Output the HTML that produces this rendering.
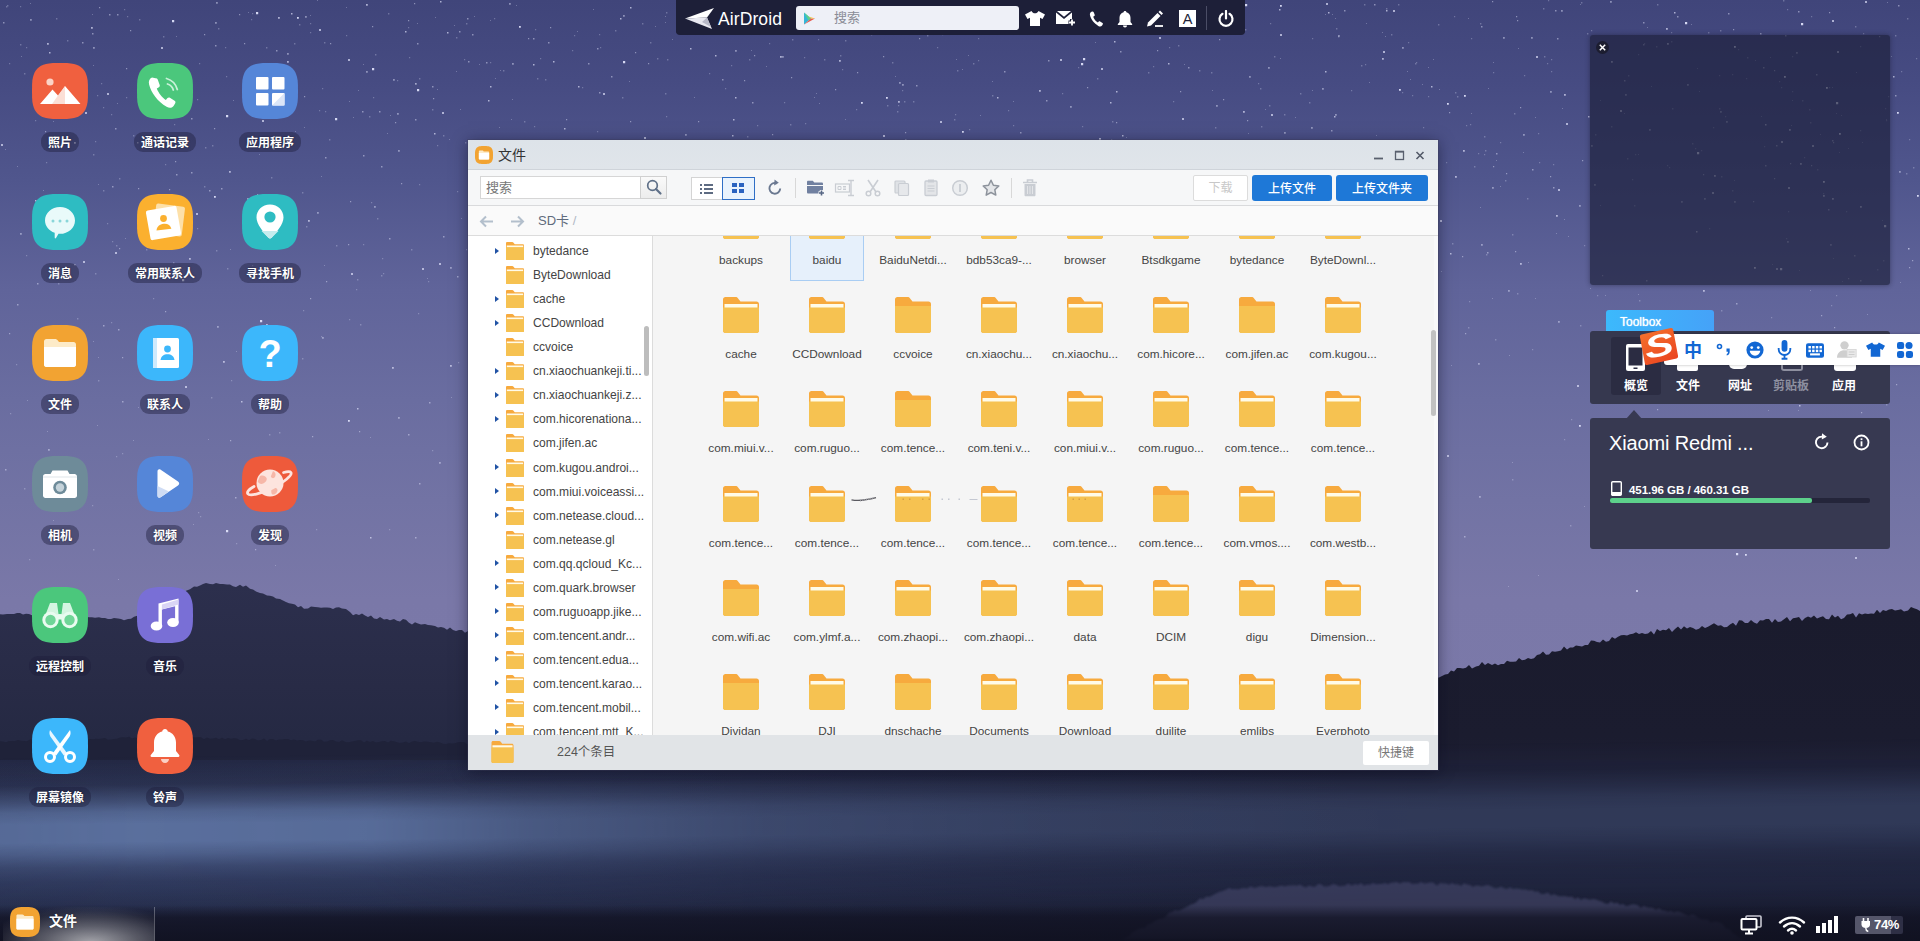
<!DOCTYPE html><html lang="zh-CN"><head><meta charset="utf-8"><title>AirDroid</title><style>
*{box-sizing:border-box;margin:0;padding:0}
html,body{width:1920px;height:941px;overflow:hidden;background:#3a3d68}
body{position:relative;font-family:"Liberation Sans","Noto Sans CJK SC",sans-serif;font-size:12px;color:#444}
#bg{position:absolute;left:0;top:0;width:1920px;height:941px;background:linear-gradient(180deg,#40457a 0px,#464b82 80px,#50568d 180px,#60649a 290px,#6a6da0 400px,#7273a4 500px,#7a78a8 600px,#7b79a9 700px,#1c1e34 701px)}
#bgsvg{position:absolute;left:0;top:0}
.abs{position:absolute}
/* top bar */
#topbar{position:absolute;left:676px;top:1px;width:569px;height:34px;box-shadow:0 -1px 0 #1d1f38;background:#1d1f38;border-radius:0 0 4px 4px}
#topbar .search{position:absolute;left:120px;top:5px;width:223px;height:24px;background:#eef0f7;border-radius:3px}
#topbar .search span{position:absolute;left:38px;top:0;line-height:24px;font-size:13px;color:#8a8c96}
#topbar svg{position:absolute}
.logo{position:absolute;left:42px;top:5px;font-size:17.5px;line-height:26px;color:#fff;letter-spacing:.1px;font-family:"Liberation Sans",sans-serif}
/* desktop icons */
.dicon{position:absolute;width:104px;height:100px;text-align:center}
.dicon svg{position:absolute;left:24px;top:0}
.dicon .lbl{position:absolute;left:0;right:0;top:69px;text-align:center;font-size:0}
.dicon .lbl span{display:inline-block;height:20px;line-height:22px;padding:0 7px;border-radius:9px;background:rgba(30,30,60,.44);color:#fff;font-size:12px;font-weight:bold;text-shadow:0 0 2px rgba(0,0,0,.5)}
/* window */
#win{position:absolute;left:468px;top:140px;width:970px;height:630px;background:#f5f5f5;box-shadow:0 0 0 1px rgba(60,60,90,.35),0 2px 14px rgba(10,10,30,.5)}
#win .title{position:absolute;left:0;top:0;width:970px;height:30px;background:linear-gradient(#dde3e9,#e0e5ea);border-bottom:1px solid #cfd4da}
#win .title .t{position:absolute;left:30px;top:0;line-height:30px;font-size:14px;color:#333}
#win .tb{position:absolute;left:0;top:30px;width:970px;height:36px;background:#f6f7f8;border-bottom:1px solid #d9dadc}
#win .pb{position:absolute;left:0;top:66px;width:970px;height:30px;background:#fafafa;border-bottom:1px solid #dcdcdc}
#win .tree{position:absolute;left:0;top:96px;width:185px;height:499px;background:#fff;border-right:1px solid #dcdcdc;overflow:hidden}
#win .grid{position:absolute;left:185px;top:96px;width:785px;height:499px;background:#f5f5f5;overflow:hidden}
#win .sb{position:absolute;left:0;top:595px;width:970px;height:35px;background:#e1e4e7}
.trow{position:absolute;left:0;height:24px;width:185px;line-height:24px;font-size:12.05px;color:#444;white-space:nowrap}
.trow i{position:absolute;left:27px;top:9.5px;width:0;height:0;border-left:4.5px solid #2153a5;border-top:3.5px solid transparent;border-bottom:3.5px solid transparent}
.trow svg{position:absolute;left:38px;top:3px}
.trow span{position:absolute;left:65px;top:1px}
.cell{position:absolute;width:74px;height:88px;text-align:center}
.cell svg{position:absolute;left:19px;top:10px}
.cell span{position:absolute;left:-6px;right:-6px;top:59px;line-height:16px;font-size:11.8px;color:#444;white-space:nowrap}
.cell.sel{background:#e6f0fb;border:1px solid #a9cdf3}.cell.sel svg{left:18px;top:9px}.cell.sel span{top:58px;left:-7px;right:-7px}
.btn{position:absolute;height:26px;line-height:27px;text-align:center;font-size:12px;border-radius:2px}
.btn.blue{background:#1e78d7;color:#fff;font-weight:500;border-radius:3px;line-height:29px}
/* right panels */
.panel{position:absolute;left:1590px;width:300px;background:#373951;border-radius:3px}
</style></head><body><div id="bg"></div><svg id="bgsvg" width="1920" height="941" viewBox="0 0 1920 941">
<defs>
<linearGradient id="gl" gradientUnits="userSpaceOnUse" x1="0" y1="584" x2="0" y2="790"><stop offset="0" stop-color="#2c2f4d"/><stop offset="0.5" stop-color="#282b46"/><stop offset="0.75" stop-color="#252943"/><stop offset="1" stop-color="#222640"/></linearGradient>
<linearGradient id="gr" gradientUnits="userSpaceOnUse" x1="0" y1="610" x2="0" y2="790"><stop offset="0" stop-color="#1a1b2d"/><stop offset="0.7" stop-color="#1b1c2f"/><stop offset="1" stop-color="#1d1f35"/></linearGradient>
<linearGradient id="mist" gradientUnits="userSpaceOnUse" x1="0" y1="755" x2="0" y2="925"><stop offset="0" stop-color="#5a6f9d" stop-opacity="0"/><stop offset="0.165" stop-color="#5a6f9d" stop-opacity=".14"/><stop offset="0.265" stop-color="#5a6f9d" stop-opacity=".55"/><stop offset="0.324" stop-color="#5a6f9d" stop-opacity=".85"/><stop offset="0.394" stop-color="#5a6f9d" stop-opacity="1"/><stop offset="0.5" stop-color="#5a6f9d" stop-opacity="1"/><stop offset="0.571" stop-color="#586d9c" stop-opacity=".8"/><stop offset="0.647" stop-color="#54699a" stop-opacity=".5"/><stop offset="0.735" stop-color="#4e6396" stop-opacity=".3"/><stop offset="0.882" stop-color="#4a5f92" stop-opacity=".15"/><stop offset="1" stop-color="#4a5f92" stop-opacity="0"/></linearGradient>
<linearGradient id="mistx" x1="0" y1="0" x2="1" y2="0"><stop offset="0" stop-color="#fff" stop-opacity=".92"/><stop offset="0.08" stop-color="#fff" stop-opacity="1"/><stop offset="0.2" stop-color="#fff" stop-opacity=".95"/><stop offset="0.28" stop-color="#fff" stop-opacity=".7"/><stop offset="0.4" stop-color="#fff" stop-opacity=".48"/><stop offset="0.55" stop-color="#fff" stop-opacity=".38"/><stop offset="0.75" stop-color="#fff" stop-opacity=".33"/><stop offset="1" stop-color="#fff" stop-opacity=".33"/></linearGradient>
<mask id="mm"><rect x="-20" y="740" width="1960" height="220" fill="url(#mistx)"/></mask>
<linearGradient id="water" gradientUnits="userSpaceOnUse" x1="0" y1="760" x2="0" y2="941"><stop offset="0" stop-color="#1b1d33"/><stop offset="0.7" stop-color="#1c2038"/><stop offset="1" stop-color="#151829"/></linearGradient>
<filter id="sb" x="0" y="0" width="100%" height="100%"><feGaussianBlur stdDeviation="0.45"/></filter><linearGradient id="lx" x1="0" y1="0" x2="1" y2="0"><stop offset="0" stop-color="#34406a" stop-opacity=".3"/><stop offset="0.3" stop-color="#34406a" stop-opacity=".26"/><stop offset="0.7" stop-color="#34406a" stop-opacity="0"/></linearGradient><filter id="blur2"><feGaussianBlur stdDeviation="1.2"/></filter>
</defs>
<g fill="#e6e8ff" filter="url(#sb)"><path fill-opacity="0.28" d="M622 97h1.4v1.4h-1.4zM181 373h1v1h-1zM95 141h1.2v1.2h-1.2zM1492 298h1v1h-1zM1169 47h1.2v1.2h-1.2zM546 247h1.2v1.2h-1.2zM419 184h1.2v1.2h-1.2zM766 66h1v1h-1zM1153 66h1.2v1.2h-1.2zM1178 45h1.4v1.4h-1.4zM236 543h1.2v1.2h-1.2zM56 18h1.4v1.4h-1.4zM921 418h1.4v1.4h-1.4zM230 249h1v1h-1zM1907 18h1.4v1.4h-1.4zM1439 89h1v1h-1zM1005 12h1v1h-1zM868 18h1.2v1.2h-1.2zM263 78h1v1h-1zM275 565h1v1h-1zM1764 146h1.2v1.2h-1.2zM1535 117h1v1h-1zM1644 43h1.2v1.2h-1.2zM310 32h1.2v1.2h-1.2zM666 12h1.4v1.4h-1.4zM973 440h1.4v1.4h-1.4zM27 400h1v1h-1zM685 1h1.4v1.4h-1.4zM1260 159h1v1h-1zM60 85h1.2v1.2h-1.2zM1215 127h1.4v1.4h-1.4zM1427 195h1v1h-1zM418 313h1.2v1.2h-1.2zM895 76h1v1h-1zM649 255h1v1h-1zM93 65h1v1h-1zM479 170h1.2v1.2h-1.2zM1382 32h1v1h-1zM1779 81h1.2v1.2h-1.2zM657 58h1.4v1.4h-1.4zM388 13h1.4v1.4h-1.4zM119 178h1.4v1.4h-1.4zM899 287h1v1h-1zM156 146h1.2v1.2h-1.2zM1470 124h1.2v1.2h-1.2zM1721 310h1.4v1.4h-1.4zM1544 56h1.4v1.4h-1.4zM1213 159h1.2v1.2h-1.2zM67 40h1.4v1.4h-1.4zM1433 441h1.4v1.4h-1.4zM1811 16h1.2v1.2h-1.2zM825 316h1.4v1.4h-1.4zM1695 148h1.2v1.2h-1.2zM1786 238h1.2v1.2h-1.2zM800 553h1v1h-1zM750 259h1v1h-1zM1747 57h1.4v1.4h-1.4zM1736 397h1v1h-1zM1802 100h1.4v1.4h-1.4zM588 269h1.4v1.4h-1.4zM769 43h1.2v1.2h-1.2zM1721 176h1.4v1.4h-1.4zM382 258h1.2v1.2h-1.2zM1719 108h1.4v1.4h-1.4zM93 549h1.4v1.4h-1.4zM317 0h1v1h-1zM456 37h1.4v1.4h-1.4zM1261 126h1.4v1.4h-1.4zM973 411h1.2v1.2h-1.2zM1913 167h1.4v1.4h-1.4zM1317 587h1v1h-1zM1570 525h1.4v1.4h-1.4zM493 181h1.2v1.2h-1.2zM1103 184h1.2v1.2h-1.2zM942 315h1.2v1.2h-1.2zM957 70h1.4v1.4h-1.4zM1078 67h1.2v1.2h-1.2zM1886 404h1.4v1.4h-1.4zM290 95h1.2v1.2h-1.2zM1820 134h1v1h-1zM887 105h1.4v1.4h-1.4zM899 188h1.2v1.2h-1.2zM722 162h1v1h-1zM356 289h1.2v1.2h-1.2zM1611 126h1.4v1.4h-1.4zM227 268h1.4v1.4h-1.4zM1657 4h1.4v1.4h-1.4zM955 190h1.4v1.4h-1.4zM1788 211h1.2v1.2h-1.2zM1872 419h1.2v1.2h-1.2zM1369 82h1v1h-1zM1471 38h1.2v1.2h-1.2zM1281 293h1v1h-1zM1787 9h1.2v1.2h-1.2zM30 3h1v1h-1zM419 78h1.4v1.4h-1.4zM1300 93h1.4v1.4h-1.4zM1512 462h1v1h-1zM1600 205h1v1h-1zM369 116h1.4v1.4h-1.4zM1126 137h1v1h-1zM98 357h1v1h-1zM868 217h1.4v1.4h-1.4zM703 212h1.2v1.2h-1.2zM1062 93h1.2v1.2h-1.2zM474 16h1v1h-1zM500 70h1v1h-1zM357 279h1.4v1.4h-1.4zM173 262h1.4v1.4h-1.4zM511 119h1v1h-1zM1348 368h1.2v1.2h-1.2zM1860 46h1.2v1.2h-1.2zM599 355h1.4v1.4h-1.4zM537 78h1.4v1.4h-1.4zM437 145h1.2v1.2h-1.2zM316 529h1.2v1.2h-1.2zM1863 33h1.2v1.2h-1.2zM454 25h1v1h-1zM231 380h1.2v1.2h-1.2zM162 378h1.4v1.4h-1.4zM465 142h1.4v1.4h-1.4zM845 40h1.4v1.4h-1.4zM1632 179h1.2v1.2h-1.2zM1619 536h1.2v1.2h-1.2zM1030 200h1.4v1.4h-1.4zM20 44h1.4v1.4h-1.4zM845 400h1.4v1.4h-1.4zM1433 59h1v1h-1zM1212 335h1v1h-1zM792 39h1.4v1.4h-1.4zM233 100h1v1h-1zM1480 207h1v1h-1zM1842 281h1v1h-1zM466 249h1.2v1.2h-1.2zM728 5h1.2v1.2h-1.2zM306 226h1.4v1.4h-1.4zM1468 18h1v1h-1zM1634 205h1.4v1.4h-1.4zM1920 256h1.2v1.2h-1.2zM1084 146h1.2v1.2h-1.2zM1287 368h1.4v1.4h-1.4zM540 58h1.2v1.2h-1.2zM667 59h1.4v1.4h-1.4zM1699 91h1v1h-1zM1184 243h1v1h-1zM302 192h1.4v1.4h-1.4zM437 89h1v1h-1zM817 181h1.2v1.2h-1.2zM1836 113h1v1h-1zM375 54h1.4v1.4h-1.4zM1260 88h1.4v1.4h-1.4zM53 121h1v1h-1zM1860 130h1.2v1.2h-1.2zM1064 145h1.4v1.4h-1.4zM1317 348h1.2v1.2h-1.2zM1488 88h1v1h-1zM1672 108h1.4v1.4h-1.4zM1332 14h1v1h-1zM937 47h1.2v1.2h-1.2zM929 20h1.4v1.4h-1.4zM913 101h1.4v1.4h-1.4zM993 231h1v1h-1zM1131 28h1.2v1.2h-1.2zM636 300h1.2v1.2h-1.2zM383 273h1.2v1.2h-1.2zM1523 152h1v1h-1zM647 207h1.2v1.2h-1.2zM1717 518h1v1h-1zM324 42h1.4v1.4h-1.4zM1098 422h1v1h-1zM1352 140h1.4v1.4h-1.4zM1246 259h1v1h-1zM1177 497h1.2v1.2h-1.2zM1155 212h1.4v1.4h-1.4zM1015 225h1.2v1.2h-1.2zM747 136h1.4v1.4h-1.4zM1408 42h1.2v1.2h-1.2zM1909 139h1.2v1.2h-1.2zM1832 87h1v1h-1zM969 148h1v1h-1zM1009 2h1.4v1.4h-1.4zM679 318h1v1h-1zM92 505h1.2v1.2h-1.2zM1274 56h1.4v1.4h-1.4zM1584 506h1v1h-1zM1300 206h1v1h-1zM1132 365h1.4v1.4h-1.4zM197 228h1.2v1.2h-1.2zM1457 96h1.4v1.4h-1.4zM1539 162h1.2v1.2h-1.2zM111 114h1.2v1.2h-1.2zM491 170h1.2v1.2h-1.2zM740 370h1.4v1.4h-1.4zM1452 243h1.4v1.4h-1.4zM1454 16h1.2v1.2h-1.2zM1346 279h1v1h-1zM927 35h1.4v1.4h-1.4zM1886 119h1v1h-1zM1121 234h1.4v1.4h-1.4zM1068 33h1.2v1.2h-1.2zM390 115h1v1h-1zM1656 46h1.4v1.4h-1.4zM183 502h1.4v1.4h-1.4zM594 165h1.4v1.4h-1.4zM373 97h1.2v1.2h-1.2zM863 158h1.2v1.2h-1.2zM1112 264h1.2v1.2h-1.2zM10 413h1.2v1.2h-1.2zM898 105h1.2v1.2h-1.2zM1199 70h1.4v1.4h-1.4zM1564 219h1v1h-1zM1691 24h1v1h-1zM1708 32h1.4v1.4h-1.4zM63 215h1.2v1.2h-1.2zM1446 162h1.2v1.2h-1.2zM1003 433h1.2v1.2h-1.2zM1166 294h1v1h-1zM1228 316h1.2v1.2h-1.2zM93 341h1v1h-1zM599 34h1.2v1.2h-1.2zM842 69h1.2v1.2h-1.2zM784 102h1.2v1.2h-1.2zM1412 265h1v1h-1zM650 42h1.4v1.4h-1.4zM216 250h1.4v1.4h-1.4zM1846 211h1.2v1.2h-1.2zM53 520h1v1h-1zM1391 34h1.4v1.4h-1.4zM1343 512h1.4v1.4h-1.4zM93 154h1.4v1.4h-1.4zM794 26h1v1h-1zM621 326h1v1h-1zM139 19h1.4v1.4h-1.4zM1190 381h1v1h-1zM360 324h1.4v1.4h-1.4zM1248 133h1v1h-1zM1543 8h1.4v1.4h-1.4zM310 23h1.2v1.2h-1.2zM705 344h1.4v1.4h-1.4zM494 18h1.2v1.2h-1.2zM751 50h1v1h-1zM1324 285h1.2v1.2h-1.2zM644 400h1v1h-1zM124 9h1.2v1.2h-1.2zM1638 154h1v1h-1zM97 425h1v1h-1zM818 39h1.2v1.2h-1.2zM460 109h1v1h-1zM346 7h1v1h-1zM417 23h1v1h-1zM127 16h1.2v1.2h-1.2zM781 220h1.2v1.2h-1.2zM1478 153h1.2v1.2h-1.2zM742 167h1.2v1.2h-1.2zM266 47h1.4v1.4h-1.4zM1538 575h1v1h-1zM1208 187h1v1h-1zM126 97h1.2v1.2h-1.2zM813 341h1.4v1.4h-1.4zM1385 36h1v1h-1zM928 162h1.2v1.2h-1.2zM840 55h1.4v1.4h-1.4zM98 184h1v1h-1zM325 111h1.2v1.2h-1.2zM1512 479h1.4v1.4h-1.4zM1823 193h1.2v1.2h-1.2zM212 145h1.4v1.4h-1.4zM1259 244h1.4v1.4h-1.4zM479 64h1v1h-1zM1423 127h1.2v1.2h-1.2zM559 330h1.4v1.4h-1.4zM1867 314h1v1h-1zM449 139h1v1h-1zM329 139h1.4v1.4h-1.4zM371 202h1.2v1.2h-1.2zM908 177h1.4v1.4h-1.4zM1097 141h1.4v1.4h-1.4zM1325 14h1v1h-1zM1770 57h1v1h-1zM77 318h1.4v1.4h-1.4zM47 431h1v1h-1zM336 245h1.4v1.4h-1.4zM988 4h1.4v1.4h-1.4zM363 244h1.2v1.2h-1.2zM1173 101h1.2v1.2h-1.2zM1591 30h1.2v1.2h-1.2zM1792 56h1.2v1.2h-1.2zM1312 446h1v1h-1zM1422 84h1v1h-1zM117 103h1v1h-1zM1211 341h1v1h-1zM116 245h1.4v1.4h-1.4zM322 88h1.2v1.2h-1.2zM456 71h1v1h-1zM95 273h1.4v1.4h-1.4zM812 152h1.2v1.2h-1.2zM464 59h1.2v1.2h-1.2zM163 36h1.4v1.4h-1.4zM1339 370h1.4v1.4h-1.4zM1518 48h1v1h-1zM1335 235h1.2v1.2h-1.2zM1551 59h1.2v1.2h-1.2zM597 131h1.2v1.2h-1.2zM993 159h1.2v1.2h-1.2zM1045 188h1.2v1.2h-1.2zM814 97h1v1h-1zM905 494h1.4v1.4h-1.4zM1732 74h1.2v1.2h-1.2zM1895 35h1.4v1.4h-1.4zM788 292h1.2v1.2h-1.2zM1885 108h1.2v1.2h-1.2zM709 73h1.2v1.2h-1.2zM310 15h1v1h-1zM1517 293h1.4v1.4h-1.4zM112 241h1.2v1.2h-1.2zM978 201h1.2v1.2h-1.2zM1407 71h1v1h-1zM1624 113h1v1h-1zM1900 282h1v1h-1zM1343 297h1v1h-1zM1792 100h1v1h-1zM906 324h1.4v1.4h-1.4zM478 365h1.2v1.2h-1.2zM1111 139h1.2v1.2h-1.2zM363 64h1v1h-1zM200 516h1.2v1.2h-1.2zM295 352h1.4v1.4h-1.4zM1671 32h1.2v1.2h-1.2zM602 248h1v1h-1zM600 47h1.2v1.2h-1.2zM17 166h1v1h-1zM1792 91h1.2v1.2h-1.2zM1287 184h1.4v1.4h-1.4zM1719 75h1.2v1.2h-1.2zM1556 233h1v1h-1zM174 124h1.2v1.2h-1.2zM1852 361h1.4v1.4h-1.4zM784 382h1v1h-1zM954 119h1.4v1.4h-1.4zM978 60h1.2v1.2h-1.2zM806 573h1.4v1.4h-1.4zM984 216h1v1h-1zM197 99h1.2v1.2h-1.2zM1280 58h1v1h-1zM500 175h1.2v1.2h-1.2zM211 397h1.4v1.4h-1.4zM968 55h1v1h-1zM944 253h1.2v1.2h-1.2zM199 63h1.2v1.2h-1.2zM1754 362h1.2v1.2h-1.2zM1072 495h1.2v1.2h-1.2zM1638 294h1v1h-1zM1725 116h1.2v1.2h-1.2zM1267 197h1.2v1.2h-1.2zM1768 410h1v1h-1zM572 50h1.2v1.2h-1.2zM293 338h1v1h-1zM684 446h1v1h-1zM940 23h1.2v1.2h-1.2zM43 190h1v1h-1zM381 275h1.4v1.4h-1.4zM593 9h1v1h-1zM349 319h1.2v1.2h-1.2zM1307 316h1v1h-1zM1886 120h1.2v1.2h-1.2zM992 95h1.4v1.4h-1.4zM1469 301h1.2v1.2h-1.2zM1047 16h1.2v1.2h-1.2zM1163 10h1.4v1.4h-1.4zM1268 162h1.4v1.4h-1.4zM252 265h1.2v1.2h-1.2zM1339 324h1.4v1.4h-1.4zM279 328h1.2v1.2h-1.2zM1065 381h1.2v1.2h-1.2zM516 5h1v1h-1zM29 559h1.2v1.2h-1.2zM1508 586h1v1h-1zM1184 64h1v1h-1zM588 396h1.2v1.2h-1.2zM1393 188h1.4v1.4h-1.4zM761 495h1.4v1.4h-1.4zM218 28h1.4v1.4h-1.4zM150 403h1.2v1.2h-1.2zM1628 75h1.4v1.4h-1.4zM980 115h1v1h-1zM59 235h1.4v1.4h-1.4zM208 439h1v1h-1zM582 87h1.2v1.2h-1.2zM490 62h1.2v1.2h-1.2zM1799 270h1v1h-1zM1597 295h1.2v1.2h-1.2zM1361 65h1.4v1.4h-1.4zM1761 116h1v1h-1zM865 360h1.4v1.4h-1.4zM648 457h1v1h-1zM1245 29h1.4v1.4h-1.4zM853 197h1.4v1.4h-1.4zM1148 72h1.4v1.4h-1.4zM1854 377h1.4v1.4h-1.4zM964 1h1.2v1.2h-1.2zM1817 169h1.4v1.4h-1.4zM665 16h1v1h-1zM1141 217h1v1h-1zM1374 518h1.4v1.4h-1.4zM1189 367h1v1h-1zM370 437h1v1h-1zM428 281h1.2v1.2h-1.2zM904 101h1.4v1.4h-1.4zM1638 54h1.2v1.2h-1.2zM725 88h1.2v1.2h-1.2zM991 150h1.2v1.2h-1.2zM1218 5h1v1h-1zM623 219h1.2v1.2h-1.2zM1277 320h1.2v1.2h-1.2zM175 68h1.4v1.4h-1.4zM71 80h1.4v1.4h-1.4zM978 38h1.2v1.2h-1.2zM252 13h1.2v1.2h-1.2zM1564 439h1.2v1.2h-1.2zM5 149h1v1h-1zM1810 290h1v1h-1zM1738 49h1.2v1.2h-1.2zM534 126h1.2v1.2h-1.2zM168 140h1v1h-1zM1484 154h1.2v1.2h-1.2zM1500 142h1.2v1.2h-1.2zM1336 28h1.4v1.4h-1.4zM791 387h1v1h-1zM642 23h1.4v1.4h-1.4zM969 129h1.2v1.2h-1.2zM520 312h1v1h-1zM901 554h1.4v1.4h-1.4zM1709 228h1.2v1.2h-1.2zM204 186h1.4v1.4h-1.4zM902 90h1.2v1.2h-1.2zM1833 258h1v1h-1zM1441 271h1v1h-1zM146 249h1.4v1.4h-1.4zM20 6h1.2v1.2h-1.2zM1165 393h1v1h-1zM1422 185h1.2v1.2h-1.2zM458 362h1.2v1.2h-1.2zM890 244h1v1h-1zM1669 167h1.2v1.2h-1.2zM251 19h1.2v1.2h-1.2zM731 65h1.2v1.2h-1.2zM85 80h1v1h-1zM1295 117h1v1h-1zM1402 92h1.2v1.2h-1.2zM303 310h1.2v1.2h-1.2zM1538 133h1.2v1.2h-1.2zM735 164h1.2v1.2h-1.2zM1424 171h1v1h-1zM941 349h1.2v1.2h-1.2zM699 177h1.4v1.4h-1.4zM1512 234h1.4v1.4h-1.4zM1781 87h1.2v1.2h-1.2zM1284 114h1.4v1.4h-1.4zM1500 186h1v1h-1zM133 135h1.4v1.4h-1.4zM500 270h1.2v1.2h-1.2zM1286 263h1.2v1.2h-1.2zM353 117h1v1h-1zM1044 473h1.2v1.2h-1.2zM225 47h1.2v1.2h-1.2zM816 93h1v1h-1zM1600 100h1v1h-1zM934 335h1v1h-1zM1856 72h1v1h-1zM1647 27h1v1h-1zM891 27h1.2v1.2h-1.2zM1186 456h1.4v1.4h-1.4zM892 62h1.4v1.4h-1.4zM26 255h1.2v1.2h-1.2zM1428 96h1.2v1.2h-1.2zM1468 327h1.4v1.4h-1.4zM911 340h1v1h-1zM1338 36h1.4v1.4h-1.4zM905 221h1.4v1.4h-1.4zM1214 153h1.4v1.4h-1.4zM1412 172h1.4v1.4h-1.4zM1211 72h1.4v1.4h-1.4zM856 109h1.2v1.2h-1.2zM672 39h1v1h-1zM1667 165h1.2v1.2h-1.2zM21 56h1v1h-1zM259 154h1v1h-1zM1105 33h1.4v1.4h-1.4zM554 236h1v1h-1zM1580 325h1.4v1.4h-1.4zM198 512h1.2v1.2h-1.2zM1291 148h1.4v1.4h-1.4zM645 397h1.4v1.4h-1.4zM118 579h1v1h-1zM1471 113h1v1h-1zM1375 483h1.2v1.2h-1.2zM1053 33h1.4v1.4h-1.4zM294 43h1.4v1.4h-1.4zM1547 63h1.2v1.2h-1.2zM1438 24h1.4v1.4h-1.4zM46 162h1.2v1.2h-1.2zM956 59h1v1h-1zM1451 365h1v1h-1zM1734 180h1v1h-1zM1493 72h1.2v1.2h-1.2zM1185 10h1.2v1.2h-1.2zM861 156h1v1h-1zM1412 95h1.2v1.2h-1.2zM1082 126h1.2v1.2h-1.2zM809 7h1.2v1.2h-1.2zM1891 56h1v1h-1zM1697 68h1v1h-1zM1087 186h1v1h-1zM527 242h1.2v1.2h-1.2zM1755 60h1v1h-1zM248 12h1v1h-1zM934 389h1.4v1.4h-1.4zM1652 366h1.2v1.2h-1.2zM1010 310h1.2v1.2h-1.2zM133 440h1v1h-1zM271 177h1.4v1.4h-1.4zM929 486h1v1h-1zM432 109h1.4v1.4h-1.4zM1877 269h1.4v1.4h-1.4zM1128 142h1v1h-1zM505 461h1.2v1.2h-1.2zM1841 115h1v1h-1zM299 24h1.4v1.4h-1.4zM1428 67h1v1h-1zM1804 157h1.2v1.2h-1.2zM295 131h1v1h-1zM575 489h1.2v1.2h-1.2zM1810 122h1.4v1.4h-1.4zM1316 351h1.2v1.2h-1.2zM1122 327h1.2v1.2h-1.2zM757 125h1.2v1.2h-1.2zM1112 121h1.4v1.4h-1.4zM176 36h1v1h-1zM490 20h1v1h-1zM1455 92h1.4v1.4h-1.4zM1046 552h1.2v1.2h-1.2zM161 238h1v1h-1zM1013 125h1.2v1.2h-1.2zM26 47h1.2v1.2h-1.2zM1357 235h1v1h-1zM1309 102h1.4v1.4h-1.4zM880 376h1v1h-1zM1532 349h1.2v1.2h-1.2zM662 310h1.4v1.4h-1.4zM594 162h1v1h-1zM1888 96h1.2v1.2h-1.2zM897 111h1.4v1.4h-1.4zM107 223h1.2v1.2h-1.2zM1553 164h1.2v1.2h-1.2zM1887 2h1v1h-1zM1376 135h1v1h-1zM1018 221h1.2v1.2h-1.2zM451 397h1v1h-1zM896 234h1.4v1.4h-1.4zM1746 78h1.2v1.2h-1.2zM768 160h1.4v1.4h-1.4zM1720 30h1.4v1.4h-1.4zM1605 295h1v1h-1zM1154 336h1v1h-1zM1212 90h1v1h-1zM1571 419h1.2v1.2h-1.2zM983 291h1v1h-1zM512 99h1v1h-1zM570 287h1.4v1.4h-1.4zM686 214h1.4v1.4h-1.4zM590 355h1v1h-1zM443 135h1.4v1.4h-1.4zM205 147h1.4v1.4h-1.4zM1175 261h1.2v1.2h-1.2zM621 489h1.2v1.2h-1.2zM101 83h1.2v1.2h-1.2zM435 17h1v1h-1zM1337 237h1.2v1.2h-1.2zM302 358h1.4v1.4h-1.4zM960 330h1.2v1.2h-1.2zM83 76h1.4v1.4h-1.4zM714 12h1v1h-1zM58 283h1.4v1.4h-1.4zM1639 300h1.4v1.4h-1.4zM718 160h1v1h-1zM321 176h1v1h-1zM1298 187h1.4v1.4h-1.4zM6 6h1.4v1.4h-1.4zM805 123h1.2v1.2h-1.2zM866 348h1v1h-1zM1484 136h1.4v1.4h-1.4zM811 237h1v1h-1zM714 267h1.4v1.4h-1.4zM409 57h1.2v1.2h-1.2zM267 248h1.4v1.4h-1.4zM111 322h1.2v1.2h-1.2zM773 522h1v1h-1zM487 443h1v1h-1zM972 321h1.2v1.2h-1.2zM992 81h1v1h-1zM1855 26h1.4v1.4h-1.4zM1415 63h1.4v1.4h-1.4zM1230 191h1.4v1.4h-1.4zM535 29h1.2v1.2h-1.2zM296 339h1v1h-1zM171 78h1.2v1.2h-1.2zM1901 71h1.2v1.2h-1.2zM702 345h1.2v1.2h-1.2zM1836 295h1.2v1.2h-1.2zM321 336h1.2v1.2h-1.2zM16 364h1.2v1.2h-1.2zM655 26h1v1h-1zM503 70h1.4v1.4h-1.4zM973 63h1.4v1.4h-1.4zM524 121h1.4v1.4h-1.4zM1398 4h1.4v1.4h-1.4zM1882 220h1v1h-1zM138 407h1v1h-1zM1382 150h1.2v1.2h-1.2zM125 238h1v1h-1zM1260 183h1.4v1.4h-1.4zM1097 78h1.4v1.4h-1.4zM553 325h1.4v1.4h-1.4zM9 63h1.2v1.2h-1.2zM1354 376h1v1h-1zM978 26h1.4v1.4h-1.4zM187 223h1.4v1.4h-1.4zM824 239h1.4v1.4h-1.4zM166 90h1.2v1.2h-1.2zM494 337h1.2v1.2h-1.2zM934 195h1.2v1.2h-1.2zM940 10h1v1h-1zM962 69h1v1h-1zM279 432h1.4v1.4h-1.4zM1351 90h1.2v1.2h-1.2zM1002 413h1v1h-1zM1783 0h1.4v1.4h-1.4zM46 459h1v1h-1zM1848 148h1v1h-1zM387 133h1v1h-1zM790 124h1.4v1.4h-1.4zM1627 421h1.4v1.4h-1.4zM116 456h1.2v1.2h-1.2zM377 218h1.4v1.4h-1.4zM1701 150h1.2v1.2h-1.2zM1485 150h1.4v1.4h-1.4zM1335 18h1v1h-1zM1269 105h1.4v1.4h-1.4zM165 164h1.2v1.2h-1.2zM794 251h1.2v1.2h-1.2zM53 137h1v1h-1zM1258 83h1.2v1.2h-1.2zM226 76h1.2v1.2h-1.2zM606 384h1.4v1.4h-1.4zM1425 556h1.2v1.2h-1.2zM1105 337h1v1h-1zM587 165h1.4v1.4h-1.4zM1410 79h1v1h-1zM1883 260h1.4v1.4h-1.4zM7 5h1.4v1.4h-1.4zM749 59h1.4v1.4h-1.4zM1270 23h1.2v1.2h-1.2zM319 110h1.2v1.2h-1.2zM1524 75h1.2v1.2h-1.2zM1496 160h1v1h-1zM802 152h1.2v1.2h-1.2zM666 116h1.2v1.2h-1.2zM408 27h1.2v1.2h-1.2zM499 127h1v1h-1zM92 14h1v1h-1zM1839 152h1v1h-1zM845 119h1v1h-1zM717 193h1.2v1.2h-1.2zM1635 154h1.2v1.2h-1.2zM1364 4h1.4v1.4h-1.4zM1294 541h1.2v1.2h-1.2zM1795 378h1.4v1.4h-1.4zM1791 125h1v1h-1zM1265 109h1v1h-1zM1116 191h1v1h-1zM1509 355h1v1h-1zM1416 62h1.2v1.2h-1.2zM193 524h1v1h-1zM1343 550h1v1h-1zM1551 71h1.2v1.2h-1.2zM1829 87h1.2v1.2h-1.2zM1568 236h1v1h-1zM1505 180h1.4v1.4h-1.4zM1627 158h1.4v1.4h-1.4zM471 232h1.2v1.2h-1.2zM1809 512h1.4v1.4h-1.4zM1920 64h1v1h-1zM1474 166h1.4v1.4h-1.4zM397 80h1.2v1.2h-1.2zM461 218h1v1h-1zM1637 384h1.4v1.4h-1.4zM1528 262h1v1h-1zM1809 109h1.4v1.4h-1.4zM1072 326h1.2v1.2h-1.2zM24 73h1.4v1.4h-1.4zM665 22h1v1h-1zM1008 110h1.2v1.2h-1.2zM896 170h1.2v1.2h-1.2zM974 202h1v1h-1zM1862 142h1v1h-1zM545 79h1.4v1.4h-1.4zM1413 167h1v1h-1zM1398 296h1.4v1.4h-1.4zM803 176h1.4v1.4h-1.4zM1595 134h1.4v1.4h-1.4zM457 191h1.2v1.2h-1.2zM24 488h1.4v1.4h-1.4zM56 207h1.2v1.2h-1.2zM531 191h1.4v1.4h-1.4zM103 190h1.4v1.4h-1.4zM1590 288h1v1h-1zM1184 333h1.4v1.4h-1.4zM98 380h1.4v1.4h-1.4zM707 239h1.4v1.4h-1.4zM1466 125h1.2v1.2h-1.2zM1692 143h1.4v1.4h-1.4zM1580 4h1v1h-1zM651 160h1.2v1.2h-1.2zM349 101h1v1h-1zM574 35h1.2v1.2h-1.2zM1581 2h1.4v1.4h-1.4zM819 372h1.4v1.4h-1.4zM122 453h1.2v1.2h-1.2zM1713 127h1.2v1.2h-1.2zM1671 41h1.4v1.4h-1.4zM103 107h1.2v1.2h-1.2zM1334 236h1v1h-1zM1562 108h1v1h-1zM519 255h1.4v1.4h-1.4zM1366 23h1v1h-1zM696 285h1.4v1.4h-1.4zM1095 42h1v1h-1zM1486 254h1.4v1.4h-1.4zM269 434h1.4v1.4h-1.4zM1587 33h1.4v1.4h-1.4zM1732 190h1.4v1.4h-1.4zM1312 38h1.2v1.2h-1.2zM942 34h1.2v1.2h-1.2zM1331 215h1v1h-1zM496 433h1v1h-1zM987 275h1.4v1.4h-1.4zM574 540h1v1h-1zM1493 62h1v1h-1zM577 31h1v1h-1zM1386 8h1.4v1.4h-1.4zM324 265h1v1h-1zM346 35h1.2v1.2h-1.2zM1701 342h1.4v1.4h-1.4zM1651 86h1v1h-1zM1535 298h1v1h-1zM1831 305h1.2v1.2h-1.2zM1692 448h1.4v1.4h-1.4zM1345 410h1.4v1.4h-1.4zM304 127h1v1h-1zM568 282h1.2v1.2h-1.2zM389 529h1.2v1.2h-1.2zM432 450h1.2v1.2h-1.2zM35 120h1.2v1.2h-1.2zM64 198h1.2v1.2h-1.2zM1527 198h1.4v1.4h-1.4zM694 97h1v1h-1zM707 21h1.2v1.2h-1.2zM466 23h1.4v1.4h-1.4zM833 253h1.4v1.4h-1.4zM84 239h1v1h-1zM1013 101h1v1h-1zM1514 113h1.4v1.4h-1.4zM615 30h1.4v1.4h-1.4zM1312 90h1v1h-1zM1495 339h1.4v1.4h-1.4zM892 227h1.4v1.4h-1.4zM1798 410h1v1h-1zM1584 245h1.2v1.2h-1.2zM358 90h1v1h-1zM1813 356h1v1h-1zM1023 178h1v1h-1zM1408 162h1.4v1.4h-1.4zM503 460h1.4v1.4h-1.4zM824 59h1.4v1.4h-1.4zM1133 337h1v1h-1zM864 11h1.4v1.4h-1.4zM427 278h1v1h-1zM1717 397h1v1h-1zM629 81h1v1h-1zM1772 264h1v1h-1zM153 298h1.2v1.2h-1.2zM764 352h1.4v1.4h-1.4zM665 93h1.4v1.4h-1.4zM1548 0h1.2v1.2h-1.2zM63 233h1.2v1.2h-1.2zM718 443h1.2v1.2h-1.2zM1118 23h1.4v1.4h-1.4zM1318 300h1v1h-1zM411 249h1.4v1.4h-1.4zM1906 173h1.4v1.4h-1.4zM1231 361h1.2v1.2h-1.2zM806 573h1v1h-1zM1365 64h1.2v1.2h-1.2zM804 57h1.2v1.2h-1.2zM938 189h1.2v1.2h-1.2zM482 159h1.4v1.4h-1.4zM415 83h1.2v1.2h-1.2zM97 95h1.2v1.2h-1.2zM955 114h1.2v1.2h-1.2zM1285 156h1.2v1.2h-1.2zM1480 23h1.4v1.4h-1.4zM1916 58h1.2v1.2h-1.2zM236 351h1v1h-1zM495 78h1v1h-1zM1771 317h1.2v1.2h-1.2zM819 103h1v1h-1z"/><path fill-opacity="0.45" d="M429 402h1.5v1.5h-1.5zM277 75h1.2v1.2h-1.2zM1103 336h1.5v1.5h-1.5zM1681 201h1.8v1.8h-1.8zM1404 198h1.5v1.5h-1.5zM599 92h1.5v1.5h-1.5zM1162 220h1.5v1.5h-1.5zM281 529h1.5v1.5h-1.5zM54 136h1.5v1.5h-1.5zM235 497h1.5v1.5h-1.5zM249 270h1.5v1.5h-1.5zM1909 267h1.2v1.2h-1.2zM1020 132h1.5v1.5h-1.5zM472 286h1.8v1.8h-1.8zM1561 10h1.8v1.8h-1.8zM735 307h1.8v1.8h-1.8zM1798 11h1.5v1.5h-1.5zM1462 256h1.2v1.2h-1.2zM780 153h1.2v1.2h-1.2zM1003 437h1.8v1.8h-1.8zM1492 1h1.2v1.2h-1.2zM215 45h1.5v1.5h-1.5zM1311 127h1.8v1.8h-1.8zM155 269h1.2v1.2h-1.2zM752 102h1.5v1.5h-1.5zM450 267h1.8v1.8h-1.8zM330 43h1.2v1.2h-1.2zM1753 201h1.2v1.2h-1.2zM1532 169h1.5v1.5h-1.5zM635 52h1.2v1.2h-1.2zM3 22h1.5v1.5h-1.5zM1240 284h1.2v1.2h-1.2zM122 401h1.5v1.5h-1.5zM1374 4h1.5v1.5h-1.5zM1646 280h1.5v1.5h-1.5zM1515 251h1.2v1.2h-1.2zM130 30h1.2v1.2h-1.2zM215 22h1.8v1.8h-1.8zM916 85h1.5v1.5h-1.5zM900 31h1.2v1.2h-1.2zM326 281h1.2v1.2h-1.2zM630 121h1.2v1.2h-1.2zM439 462h1.8v1.8h-1.8zM1256 205h1.2v1.2h-1.2zM138 188h1.2v1.2h-1.2zM1520 107h1.2v1.2h-1.2zM1265 218h1.2v1.2h-1.2zM1090 25h1.8v1.8h-1.8zM1306 380h1.2v1.2h-1.2zM1790 163h1.2v1.2h-1.2zM1169 202h1.5v1.5h-1.5zM1194 417h1.8v1.8h-1.8zM1315 385h1.5v1.5h-1.5zM883 56h1.2v1.2h-1.2zM1657 409h1.2v1.2h-1.2zM1765 165h1.5v1.5h-1.5zM1879 36h1.2v1.2h-1.2zM1418 167h1.5v1.5h-1.5zM1306 226h1.2v1.2h-1.2zM109 14h1.5v1.5h-1.5zM1465 333h1.2v1.2h-1.2zM30 19h1.8v1.8h-1.8zM898 276h1.8v1.8h-1.8zM1356 167h1.5v1.5h-1.5zM675 264h1.2v1.2h-1.2zM731 25h1.2v1.2h-1.2zM550 27h1.2v1.2h-1.2zM1328 473h1.5v1.5h-1.5zM501 350h1.8v1.8h-1.8zM1088 402h1.2v1.2h-1.2zM1557 38h1.5v1.5h-1.5zM1247 120h1.2v1.2h-1.2zM1746 363h1.5v1.5h-1.5zM1706 398h1.8v1.8h-1.8zM716 472h1.2v1.2h-1.2zM1678 429h1.5v1.5h-1.5zM1120 51h1.5v1.5h-1.5zM1724 350h1.2v1.2h-1.2zM93 47h1.8v1.8h-1.8zM1677 16h1.5v1.5h-1.5zM917 20h1.8v1.8h-1.8zM17 304h1.5v1.5h-1.5zM1493 166h1.2v1.2h-1.2zM835 89h1.2v1.2h-1.2zM762 215h1.2v1.2h-1.2zM857 72h1.2v1.2h-1.2zM1649 129h1.8v1.8h-1.8zM771 26h1.5v1.5h-1.5zM601 163h1.8v1.8h-1.8zM398 417h1.8v1.8h-1.8zM256 102h1.8v1.8h-1.8zM1048 60h1.5v1.5h-1.5zM1111 150h1.8v1.8h-1.8zM648 63h1.2v1.2h-1.2zM782 56h1.8v1.8h-1.8zM1134 279h1.8v1.8h-1.8zM1816 74h1.5v1.5h-1.5zM1128 359h1.8v1.8h-1.8zM290 107h1.5v1.5h-1.5zM592 204h1.8v1.8h-1.8zM1045 269h1.8v1.8h-1.8zM1481 26h1.5v1.5h-1.5zM1487 252h1.5v1.5h-1.5zM1102 175h1.2v1.2h-1.2zM1687 84h1.8v1.8h-1.8zM1832 140h1.5v1.5h-1.5zM528 38h1.2v1.2h-1.2zM1523 134h1.8v1.8h-1.8zM875 261h1.8v1.8h-1.8zM1464 536h1.5v1.5h-1.5zM1479 496h1.8v1.8h-1.8zM419 483h1.5v1.5h-1.5zM1591 145h1.8v1.8h-1.8zM1004 71h1.5v1.5h-1.5zM137 142h1.5v1.5h-1.5zM917 300h1.2v1.2h-1.2zM1344 10h1.5v1.5h-1.5zM1821 315h1.2v1.2h-1.2zM1506 173h1.2v1.2h-1.2zM286 88h1.2v1.2h-1.2zM949 234h1.5v1.5h-1.5zM217 326h1.8v1.8h-1.8zM149 373h1.5v1.5h-1.5zM1377 147h1.2v1.2h-1.2zM889 217h1.8v1.8h-1.8zM597 48h1.5v1.5h-1.5zM1354 342h1.5v1.5h-1.5zM1188 67h1.5v1.5h-1.5zM255 549h1.2v1.2h-1.2zM1344 202h1.5v1.5h-1.5zM1736 303h1.5v1.5h-1.5zM1104 7h1.2v1.2h-1.2zM1828 209h1.5v1.5h-1.5zM1478 363h1.8v1.8h-1.8zM1720 111h1.8v1.8h-1.8zM1676 347h1.8v1.8h-1.8zM887 479h1.5v1.5h-1.5zM612 221h1.5v1.5h-1.5zM1834 327h1.2v1.2h-1.2zM831 191h1.8v1.8h-1.8zM239 14h1.2v1.2h-1.2zM855 398h1.8v1.8h-1.8zM892 300h1.5v1.5h-1.5zM1613 390h1.2v1.2h-1.2zM393 79h1.8v1.8h-1.8zM1124 473h1.5v1.5h-1.5zM304 96h1.2v1.2h-1.2zM953 297h1.2v1.2h-1.2zM869 322h1.2v1.2h-1.2zM381 166h1.5v1.5h-1.5zM1553 187h1.5v1.5h-1.5zM244 43h1.2v1.2h-1.2zM841 2h1.2v1.2h-1.2zM1223 99h1.2v1.2h-1.2zM1861 412h1.2v1.2h-1.2zM1021 177h1.5v1.5h-1.5zM398 150h1.8v1.8h-1.8zM1074 175h1.8v1.8h-1.8zM379 111h1.5v1.5h-1.5zM1558 321h1.8v1.8h-1.8zM1049 395h1.2v1.2h-1.2zM1796 52h1.8v1.8h-1.8zM350 201h1.2v1.2h-1.2zM668 310h1.8v1.8h-1.8zM685 134h1.8v1.8h-1.8zM1492 187h1.8v1.8h-1.8zM836 299h1.5v1.5h-1.5zM1396 146h1.5v1.5h-1.5zM902 84h1.8v1.8h-1.8zM997 356h1.8v1.8h-1.8zM1774 70h1.2v1.2h-1.2zM1811 165h1.2v1.2h-1.2zM1555 10h1.5v1.5h-1.5zM1268 67h1.8v1.8h-1.8zM816 240h1.8v1.8h-1.8zM1150 557h1.2v1.2h-1.2zM1163 270h1.2v1.2h-1.2zM1733 29h1.2v1.2h-1.2zM1517 20h1.2v1.2h-1.2zM1180 91h1.2v1.2h-1.2zM1610 1h1.8v1.8h-1.8zM257 194h1.2v1.2h-1.2zM1299 287h1.2v1.2h-1.2zM588 63h1.5v1.5h-1.5zM871 34h1.2v1.2h-1.2zM722 79h1.5v1.5h-1.5zM1594 184h1.8v1.8h-1.8zM389 238h1.5v1.5h-1.5zM948 286h1.2v1.2h-1.2zM82 42h1.5v1.5h-1.5zM1374 222h1.8v1.8h-1.8zM956 279h1.2v1.2h-1.2zM1322 88h1.8v1.8h-1.8zM1284 132h1.8v1.8h-1.8zM1038 190h1.5v1.5h-1.5zM467 18h1.5v1.5h-1.5zM966 460h1.5v1.5h-1.5zM397 113h1.8v1.8h-1.8zM209 190h1.5v1.5h-1.5zM1338 35h1.8v1.8h-1.8zM1331 258h1.8v1.8h-1.8zM1291 410h1.2v1.2h-1.2zM99 7h1.2v1.2h-1.2zM768 149h1.5v1.5h-1.5zM443 236h1.5v1.5h-1.5zM1117 151h1.2v1.2h-1.2zM276 50h1.5v1.5h-1.5zM1763 67h1.5v1.5h-1.5zM631 143h1.2v1.2h-1.2zM829 17h1.2v1.2h-1.2zM1704 198h1.8v1.8h-1.8zM1402 47h1.8v1.8h-1.8zM1294 368h1.2v1.2h-1.2zM312 436h1.2v1.2h-1.2zM1860 280h1.5v1.5h-1.5zM204 34h1.2v1.2h-1.2zM415 83h1.8v1.8h-1.8zM1118 206h1.2v1.2h-1.2zM122 357h1.2v1.2h-1.2zM919 38h1.2v1.2h-1.2zM165 311h1.2v1.2h-1.2zM247 198h1.8v1.8h-1.8zM117 14h1.5v1.5h-1.5zM1643 44h1.5v1.5h-1.5zM1219 39h1.2v1.2h-1.2zM271 94h1.5v1.5h-1.5zM118 329h1.5v1.5h-1.5zM540 274h1.8v1.8h-1.8zM432 86h1.5v1.5h-1.5zM1516 16h1.2v1.2h-1.2zM1053 198h1.8v1.8h-1.8zM310 298h1.2v1.2h-1.2zM322 337h1.8v1.8h-1.8zM1582 160h1.2v1.2h-1.2zM230 440h1.2v1.2h-1.2zM1035 18h1.2v1.2h-1.2zM1896 384h1.2v1.2h-1.2zM1833 142h1.2v1.2h-1.2zM1123 271h1.5v1.5h-1.5zM9 333h1.2v1.2h-1.2zM362 111h1.5v1.5h-1.5zM896 165h1.8v1.8h-1.8zM1624 80h1.5v1.5h-1.5zM1280 163h1.8v1.8h-1.8zM1725 379h1.8v1.8h-1.8zM348 244h1.2v1.2h-1.2zM804 15h1.2v1.2h-1.2zM372 26h1.2v1.2h-1.2zM1157 50h1.2v1.2h-1.2zM763 7h1.2v1.2h-1.2zM1643 22h1.5v1.5h-1.5zM287 53h1.8v1.8h-1.8zM415 119h1.5v1.5h-1.5zM1338 229h1.2v1.2h-1.2zM1294 568h1.2v1.2h-1.2zM852 268h1.2v1.2h-1.2zM548 42h1.5v1.5h-1.5zM47 97h1.2v1.2h-1.2zM1611 429h1.8v1.8h-1.8zM509 168h1.8v1.8h-1.8zM119 248h1.2v1.2h-1.2zM976 345h1.2v1.2h-1.2zM1579 205h1.8v1.8h-1.8zM1503 37h1.8v1.8h-1.8zM931 173h1.8v1.8h-1.8zM273 148h1.8v1.8h-1.8zM5 469h1.5v1.5h-1.5zM913 310h1.5v1.5h-1.5zM1046 100h1.5v1.5h-1.5zM1481 244h1.8v1.8h-1.8zM1018 320h1.2v1.2h-1.2zM92 33h1.5v1.5h-1.5zM1783 507h1.8v1.8h-1.8zM772 134h1.2v1.2h-1.2zM1145 156h1.2v1.2h-1.2zM653 324h1.5v1.5h-1.5zM593 226h1.5v1.5h-1.5zM1602 275h1.2v1.2h-1.2zM1787 241h1.8v1.8h-1.8zM623 15h1.8v1.8h-1.8zM1774 178h1.2v1.2h-1.2zM374 206h1.8v1.8h-1.8zM1912 260h1.2v1.2h-1.2zM1111 297h1.8v1.8h-1.8zM1734 201h1.8v1.8h-1.8zM1854 255h1.5v1.5h-1.5zM900 23h1.2v1.2h-1.2zM115 128h1.5v1.5h-1.5zM748 207h1.5v1.5h-1.5zM974 290h1.5v1.5h-1.5zM682 285h1.5v1.5h-1.5zM1207 187h1.5v1.5h-1.5zM457 276h1.5v1.5h-1.5zM1550 176h1.2v1.2h-1.2zM359 431h1.2v1.2h-1.2zM1383 242h1.5v1.5h-1.5zM366 71h1.8v1.8h-1.8zM1085 290h1.8v1.8h-1.8zM305 16h1.8v1.8h-1.8zM1260 335h1.2v1.2h-1.2zM169 189h1.2v1.2h-1.2zM1866 351h1.2v1.2h-1.2zM791 77h1.2v1.2h-1.2zM533 38h1.5v1.5h-1.5zM968 276h1.2v1.2h-1.2zM1087 87h1.2v1.2h-1.2zM415 537h1.5v1.5h-1.5zM1085 217h1.8v1.8h-1.8zM1082 7h1.8v1.8h-1.8zM1336 160h1.2v1.2h-1.2zM414 3h1.2v1.2h-1.2zM191 172h1.5v1.5h-1.5zM1070 106h1.8v1.8h-1.8zM175 161h1.2v1.2h-1.2zM103 325h1.5v1.5h-1.5zM1341 217h1.8v1.8h-1.8zM754 55h1.2v1.2h-1.2zM45 131h1.2v1.2h-1.2zM60 366h1.8v1.8h-1.8zM417 43h1.5v1.5h-1.5zM1679 500h1.2v1.2h-1.2zM633 154h1.8v1.8h-1.8zM1144 160h1.8v1.8h-1.8zM485 255h1.5v1.5h-1.5zM433 98h1.2v1.2h-1.2zM735 50h1.8v1.8h-1.8zM325 157h1.5v1.5h-1.5zM744 80h1.2v1.2h-1.2zM1785 35h1.5v1.5h-1.5zM1848 278h1.2v1.2h-1.2zM777 355h1.8v1.8h-1.8zM566 119h1.2v1.2h-1.2zM126 68h1.2v1.2h-1.2zM1550 91h1.8v1.8h-1.8zM529 257h1.8v1.8h-1.8zM459 31h1.5v1.5h-1.5zM468 61h1.5v1.5h-1.5zM487 256h1.2v1.2h-1.2zM611 76h1.5v1.5h-1.5zM899 82h1.8v1.8h-1.8zM1703 174h1.2v1.2h-1.2zM1882 347h1.5v1.5h-1.5zM1898 5h1.5v1.5h-1.5zM1449 112h1.2v1.2h-1.2zM593 593h1.5v1.5h-1.5zM1625 94h1.8v1.8h-1.8zM317 212h1.8v1.8h-1.8zM509 3h1.8v1.8h-1.8zM363 155h1.5v1.5h-1.5zM1272 144h1.5v1.5h-1.5zM408 434h1.5v1.5h-1.5zM1364 249h1.8v1.8h-1.8zM1829 12h1.2v1.2h-1.2zM1099 383h1.8v1.8h-1.8zM1211 167h1.5v1.5h-1.5zM1728 13h1.5v1.5h-1.5zM1765 421h1.8v1.8h-1.8zM1345 171h1.2v1.2h-1.2zM1335 114h1.8v1.8h-1.8zM20 233h1.8v1.8h-1.8zM1216 105h1.8v1.8h-1.8zM932 271h1.5v1.5h-1.5zM512 63h1.8v1.8h-1.8zM630 516h1.5v1.5h-1.5zM854 545h1.5v1.5h-1.5zM798 235h1.2v1.2h-1.2zM1739 344h1.8v1.8h-1.8zM1895 95h1.5v1.5h-1.5zM472 34h1.5v1.5h-1.5zM152 84h1.8v1.8h-1.8zM1776 145h1.5v1.5h-1.5zM905 139h1.5v1.5h-1.5zM214 128h1.2v1.2h-1.2zM1899 171h1.8v1.8h-1.8zM1496 153h1.5v1.5h-1.5zM48 449h1.8v1.8h-1.8zM905 132h1.2v1.2h-1.2zM1531 37h1.8v1.8h-1.8zM74 264h1.5v1.5h-1.5zM1012 467h1.2v1.2h-1.2zM901 172h1.8v1.8h-1.8zM72 103h1.2v1.2h-1.2zM176 174h1.5v1.5h-1.5zM1726 121h1.8v1.8h-1.8zM1508 290h1.8v1.8h-1.8zM1280 282h1.5v1.5h-1.5zM489 321h1.2v1.2h-1.2zM618 205h1.8v1.8h-1.8zM408 20h1.2v1.2h-1.2zM1331 130h1.5v1.5h-1.5zM1733 331h1.8v1.8h-1.8zM37 283h1.5v1.5h-1.5zM548 357h1.5v1.5h-1.5zM517 197h1.8v1.8h-1.8zM616 229h1.5v1.5h-1.5zM1830 244h1.8v1.8h-1.8zM191 118h1.5v1.5h-1.5zM1071 252h1.5v1.5h-1.5zM486 62h1.5v1.5h-1.5zM698 121h1.2v1.2h-1.2zM1116 122h1.2v1.2h-1.2zM1004 258h1.2v1.2h-1.2zM221 188h1.5v1.5h-1.5zM1809 342h1.8v1.8h-1.8zM395 122h1.2v1.2h-1.2zM1249 76h1.8v1.8h-1.8zM544 253h1.2v1.2h-1.2zM788 7h1.5v1.5h-1.5zM1373 335h1.5v1.5h-1.5zM401 183h1.2v1.2h-1.2zM112 186h1.5v1.5h-1.5zM216 2h1.8v1.8h-1.8zM1172 215h1.8v1.8h-1.8zM1142 353h1.5v1.5h-1.5zM1760 33h1.5v1.5h-1.5zM482 202h1.5v1.5h-1.5zM926 486h1.8v1.8h-1.8zM1274 507h1.5v1.5h-1.5zM1784 515h1.8v1.8h-1.8z"/><path fill-opacity="0.65" d="M765 312h1.5v1.5h-1.5zM1908 248h1.5v1.5h-1.5zM1116 91h1.5v1.5h-1.5zM115 252h2v2h-2zM898 200h1.8v1.8h-1.8zM1765 124h1.5v1.5h-1.5zM1061 208h1.5v1.5h-1.5zM447 32h1.5v1.5h-1.5zM1920 24h1.5v1.5h-1.5zM802 33h1.8v1.8h-1.8zM1566 123h2v2h-2zM858 396h1.8v1.8h-1.8zM1383 51h2v2h-2zM1855 557h2v2h-2zM578 86h1.5v1.5h-1.5zM287 61h1.8v1.8h-1.8zM1636 590h2v2h-2zM278 17h1.8v1.8h-1.8zM1110 102h1.5v1.5h-1.5zM975 171h2v2h-2zM1648 332h2v2h-2zM630 7h1.5v1.5h-1.5zM1564 94h1.8v1.8h-1.8zM1266 232h1.5v1.5h-1.5zM948 214h1.8v1.8h-1.8zM1393 10h2v2h-2zM107 93h2v2h-2zM847 517h1.8v1.8h-1.8zM1781 141h2v2h-2zM981 284h1.8v1.8h-1.8zM442 112h2v2h-2zM1329 333h2v2h-2zM1556 215h1.8v1.8h-1.8zM1799 405h1.5v1.5h-1.5zM1303 175h2v2h-2zM1611 61h1.8v1.8h-1.8zM1326 3h2v2h-2zM63 402h1.5v1.5h-1.5zM1206 402h1.5v1.5h-1.5zM940 121h2v2h-2zM357 408h1.5v1.5h-1.5zM715 20h2v2h-2zM91 27h1.8v1.8h-1.8zM1034 441h1.5v1.5h-1.5zM1667 43h1.8v1.8h-1.8zM262 120h2v2h-2zM620 18h1.5v1.5h-1.5zM1696 231h1.5v1.5h-1.5zM1054 442h2v2h-2zM735 97h1.5v1.5h-1.5zM1865 1h2v2h-2zM1271 114h2v2h-2zM1666 28h1.8v1.8h-1.8zM1114 41h1.5v1.5h-1.5zM941 11h1.5v1.5h-1.5zM1431 86h1.5v1.5h-1.5zM780 56h1.8v1.8h-1.8zM585 192h1.8v1.8h-1.8zM644 137h2v2h-2zM1012 0h1.8v1.8h-1.8zM1328 12h1.5v1.5h-1.5zM1070 287h2v2h-2zM1156 230h2v2h-2zM185 386h2v2h-2zM1105 276h2v2h-2zM85 112h2v2h-2zM392 367h1.8v1.8h-1.8zM490 86h1.5v1.5h-1.5zM1577 385h2v2h-2zM670 187h1.8v1.8h-1.8zM1060 59h2v2h-2zM1832 198h1.8v1.8h-1.8zM1101 68h2v2h-2zM1159 37h2v2h-2zM832 244h1.5v1.5h-1.5zM1161 242h1.5v1.5h-1.5zM1558 189h2v2h-2zM49 52h1.5v1.5h-1.5zM319 29h2v2h-2zM162 196h2v2h-2zM840 389h1.8v1.8h-1.8zM935 456h1.8v1.8h-1.8zM564 128h1.5v1.5h-1.5zM562 178h1.5v1.5h-1.5zM533 64h1.5v1.5h-1.5zM1455 176h1.8v1.8h-1.8zM405 31h1.5v1.5h-1.5zM1860 206h1.8v1.8h-1.8zM1099 138h2v2h-2zM1714 175h1.8v1.8h-1.8zM600 236h2v2h-2zM196 213h2v2h-2zM440 1h1.5v1.5h-1.5zM923 243h1.8v1.8h-1.8zM366 4h1.8v1.8h-1.8zM1168 63h1.5v1.5h-1.5zM1300 272h2v2h-2zM348 59h2v2h-2zM1383 212h1.8v1.8h-1.8zM1674 12h1.5v1.5h-1.5zM715 55h1.5v1.5h-1.5zM1536 56h2v2h-2zM607 358h1.5v1.5h-1.5zM553 61h1.5v1.5h-1.5zM1789 129h1.8v1.8h-1.8zM1279 9h1.5v1.5h-1.5zM809 281h2v2h-2zM223 361h1.8v1.8h-1.8zM997 26h1.5v1.5h-1.5zM488 100h1.5v1.5h-1.5zM266 324h1.8v1.8h-1.8zM976 303h1.5v1.5h-1.5zM646 153h1.5v1.5h-1.5zM370 537h1.5v1.5h-1.5zM1168 210h1.8v1.8h-1.8zM690 48h1.5v1.5h-1.5zM83 261h2v2h-2zM1588 116h1.5v1.5h-1.5zM161 47h2v2h-2zM1788 187h2v2h-2zM1325 71h1.5v1.5h-1.5zM177 345h1.5v1.5h-1.5zM1620 110h2v2h-2zM47 43h1.8v1.8h-1.8zM1732 514h2v2h-2zM1447 455h2v2h-2zM1440 220h2v2h-2zM809 202h2v2h-2zM673 297h2v2h-2zM694 332h2v2h-2zM422 268h2v2h-2zM450 365h1.8v1.8h-1.8zM582 298h1.5v1.5h-1.5zM1017 201h1.5v1.5h-1.5zM291 13h1.5v1.5h-1.5zM1353 529h2v2h-2zM1122 135h1.5v1.5h-1.5zM1161 22h1.5v1.5h-1.5zM1008 414h1.8v1.8h-1.8zM1183 261h2v2h-2zM189 258h1.8v1.8h-1.8zM546 471h1.5v1.5h-1.5zM1520 263h1.8v1.8h-1.8zM732 135h1.5v1.5h-1.5zM351 273h2v2h-2zM1182 118h2v2h-2zM1334 116h1.5v1.5h-1.5zM1374 283h1.5v1.5h-1.5zM308 220h1.8v1.8h-1.8zM777 198h2v2h-2zM1704 332h1.8v1.8h-1.8zM1280 34h2v2h-2zM1243 111h1.8v1.8h-1.8zM902 158h1.8v1.8h-1.8zM1668 325h1.8v1.8h-1.8zM1463 150h1.8v1.8h-1.8zM1305 140h1.8v1.8h-1.8zM1039 90h1.8v1.8h-1.8zM839 60h1.8v1.8h-1.8zM521 158h1.8v1.8h-1.8zM1171 419h1.5v1.5h-1.5zM168 143h1.8v1.8h-1.8zM1823 195h1.8v1.8h-1.8zM1893 76h1.5v1.5h-1.5zM1837 51h2v2h-2zM473 278h2v2h-2zM790 227h1.5v1.5h-1.5zM35 200h1.5v1.5h-1.5zM74 142h1.8v1.8h-1.8zM997 97h1.5v1.5h-1.5zM288 74h1.5v1.5h-1.5zM1387 334h2v2h-2zM1328 340h2v2h-2zM844 333h1.8v1.8h-1.8zM733 119h1.5v1.5h-1.5zM1124 288h2v2h-2zM1450 253h1.5v1.5h-1.5zM883 135h2v2h-2zM1812 145h2v2h-2zM61 82h1.5v1.5h-1.5zM266 68h1.8v1.8h-1.8zM609 200h1.5v1.5h-1.5zM229 171h1.8v1.8h-1.8zM898 101h1.8v1.8h-1.8zM241 401h1.5v1.5h-1.5zM439 263h2v2h-2zM777 533h1.5v1.5h-1.5zM735 152h2v2h-2zM928 252h1.5v1.5h-1.5zM1382 58h1.8v1.8h-1.8zM864 183h1.5v1.5h-1.5zM515 166h1.5v1.5h-1.5zM1712 192h2v2h-2zM434 133h1.5v1.5h-1.5zM603 93h2v2h-2zM1832 20h2v2h-2zM1 144h2v2h-2zM878 221h2v2h-2zM174 334h1.5v1.5h-1.5zM1800 163h1.8v1.8h-1.8zM1618 360h1.8v1.8h-1.8zM1776 268h2v2h-2zM1703 290h1.8v1.8h-1.8zM1386 10h1.5v1.5h-1.5z"/><path fill-opacity="0.9" d="M1043 17h1.8v1.8h-1.8zM1399 89h1.8v1.8h-1.8zM856 168h2.2v2.2h-2.2zM1826 87h1.8v1.8h-1.8zM583 256h2.2v2.2h-2.2zM861 102h1.8v1.8h-1.8zM1245 4h2.2v2.2h-2.2zM1717 442h2.2v2.2h-2.2zM803 161h1.8v1.8h-1.8zM1754 267h1.8v1.8h-1.8zM1745 554h1.8v1.8h-1.8zM1092 338h1.8v1.8h-1.8zM721 27h2.2v2.2h-2.2zM1823 181h1.8v1.8h-1.8zM214 196h1.8v1.8h-1.8zM510 359h1.8v1.8h-1.8zM1745 455h2.2v2.2h-2.2zM1464 95h1.8v1.8h-1.8zM623 61h2.2v2.2h-2.2zM182 279h2.2v2.2h-2.2zM894 208h1.8v1.8h-1.8zM1839 133h1.8v1.8h-1.8zM1081 63h2.2v2.2h-2.2zM699 424h2.2v2.2h-2.2zM915 27h1.8v1.8h-1.8zM1836 102h2.2v2.2h-2.2zM519 26h1.8v1.8h-1.8zM226 115h2.2v2.2h-2.2zM256 12h2.2v2.2h-2.2zM1121 227h2.2v2.2h-2.2zM1697 152h2.2v2.2h-2.2zM417 89h2.2v2.2h-2.2zM1280 5h1.8v1.8h-1.8zM1736 553h2.2v2.2h-2.2zM1427 293h1.8v1.8h-1.8zM1083 58h2.2v2.2h-2.2zM1784 76h1.8v1.8h-1.8zM1685 22h2.2v2.2h-2.2zM1606 433h1.8v1.8h-1.8zM1780 268h2.2v2.2h-2.2zM226 530h2.2v2.2h-2.2zM1917 195h1.8v1.8h-1.8zM617 225h2.2v2.2h-2.2zM372 68h2.2v2.2h-2.2zM916 394h1.8v1.8h-1.8zM260 320h2.2v2.2h-2.2zM1149 157h2.2v2.2h-2.2zM1801 23h2.2v2.2h-2.2zM962 131h1.8v1.8h-1.8zM335 118h2.2v2.2h-2.2zM1897 112h1.8v1.8h-1.8zM1447 103h1.8v1.8h-1.8zM489 394h1.8v1.8h-1.8zM1734 46h1.8v1.8h-1.8zM511 153h2.2v2.2h-2.2zM172 20h2.2v2.2h-2.2zM1884 225h2.2v2.2h-2.2zM1579 425h1.8v1.8h-1.8zM297 17h1.8v1.8h-1.8zM348 420h1.8v1.8h-1.8zM886 97h1.8v1.8h-1.8z"/></g>
<rect x="0" y="700" width="1920" height="241" fill="url(#water)"/>
<path d="M0 614.2 L3 614.4 L7 614 L10 614.1 L14 614 L17 612.9 L20 613 L23 614.5 L26 613.8 L29 613.9 L32 615.3 L35 614.6 L38 615.4 L41 615 L44 615.4 L47 614.9 L50 615.8 L53 616.2 L56 615.8 L59 616.2 L62 616.2 L65 615.3 L68 616.4 L71 616.3 L74 615.9 L77 615.5 L80 616.9 L83 616.4 L86 616.8 L89 617.2 L92 617.2 L95 617.8 L99 617.2 L102 618.1 L105 617.9 L108 618.9 L111 619.1 L114 618.1 L118 618.5 L121 618.9 L124 620.3 L128 619 L131 618.8 L134 616.8 L138 615.6 L141 613.7 L144 611.9 L147 610.6 L151 608.9 L154 607.6 L157 605.6 L160 604.2 L163 602.5 L166 601.1 L170 599 L173 596.6 L176 596 L180 594.6 L183 592.8 L186 590.7 L190 589.2 L194 586.6 L197 586.7 L200 585.4 L203 584.1 L206 582.9 L210 584.1 L213 584.3 L216 582.9 L220 584 L223 584.1 L227 584.4 L230 584.6 L233 586.3 L236 586.9 L240 584.8 L243 586.8 L246 585.4 L250 588.7 L253 589.4 L256 591.5 L260 592.9 L263 593.4 L267 595.5 L270 595.7 L273 596.5 L276 598.6 L280 599 L283 600.5 L286 601.9 L289 603.3 L292 603.7 L295 604.6 L298 607.2 L301 606.1 L304 608.7 L308 608.5 L311 606.6 L315 606.9 L318 607.2 L321 607.8 L324 607.6 L327 607.5 L330 607.8 L333 609.1 L336 607.5 L339 607.2 L342 608.4 L346 609.1 L350 612 L353 615.3 L356 614.1 L359 614.9 L362 613.4 L365 615.6 L368 616.9 L371 615.4 L374 618.4 L377 619.1 L380 617.1 L384 619.5 L387 619.1 L390 620.2 L394 619.1 L397 620.8 L400 621.4 L403 619.1 L406 619.8 L409 622.8 L412 624.4 L415 622.2 L418 623.5 L421 624.6 L425 624.1 L428 624.9 L431 625.3 L435 626.1 L438 627.6 L441 627 L444 627.7 L447 629.8 L450 627.4 L453 630 L456 631.1 L459 629.9 L462 630.1 L465 632.8 L468 631.1 L471 631.3 L474 632.7 L477 634.1 L480 633.8 L483 634.6 L486 635 L489 636.2 L492 636 L495 637.1 L498 636.5 L501 637.2 L504 638.1 L507 638.9 L510 638.6 L513 638.7 L516 639 L519 640 L522 639.9 L525 641.3 L528 641.8 L531 641.2 L534 641.8 L537 643.1 L540 643.2 L543 643.9 L546 643.6 L549 643.7 L552 644.4 L555 645.6 L558 645.2 L561 645.8 L564 646.3 L567 646.7 L570 647.1 L573 648.4 L576 647.6 L579 647.8 L582 649.7 L585 650 L588 650.6 L591 650.2 L594 651.4 L597 651.8 L600 651.1 L603 652.3 L606 652.8 L609 652.9 L612 653 L615 652.9 L618 653.4 L621 653.5 L624 653.6 L627 654.8 L630 654.6 L633 655.8 L636 654.9 L639 656.6 L642 656.6 L645 657.3 L648 657.6 L651 658 L654 657.8 L657 657.3 L660 658.8 L663 658.2 L666 658.7 L669 659.6 L672 659.8 L675 659.9 L678 661.1 L682 660.9 L685 660.8 L688 661 L691 662.3 L694 662.1 L697 662.9 L700 662.6 L703 662.7 L706 663.5 L709 664.3 L712 663.6 L715 664.9 L718 665.5 L721 665.6 L724 666 L727 665.1 L730 666.4 L733 667.1 L736 666.2 L739 666.8 L742 667.2 L745 667.9 L748 668.1 L751 668.5 L754 669.3 L757 668.5 L760 668.9 L763 669.3 L766 669.6 L769 669.8 L772 671.5 L775 671.7 L778 670.8 L781 671.7 L784 671.7 L787 672 L790 672.4 L793 673.2 L797 673.4 L800 673.3 L803 673.4 L806 673.9 L809 673.9 L812 674.8 L815 675.4 L818 675.2 L821 675 L824 675.5 L827 676.1 L830 676.7 L833 677.3 L836 677 L839 678 L842 678 L845 678 L848 678.2 L851 678.7 L854 679.3 L857 679.2 L860 679.9 L863 679.9 L867 679.8 L870 680.6 L873 681.1 L876 680.5 L879 681.3 L882 681.6 L885 682.7 L888 683 L891 682.5 L894 683.6 L897 683.7 L900 683.2 L903 683.7 L906 683.3 L909 684.5 L912 684.5 L915 685 L918 685 L921 685 L924 685.2 L927 685.1 L930 684.6 L933 685.5 L936 684.7 L939 685.1 L942 686.2 L945 685.3 L948 685.5 L951 685.7 L954 687.1 L957 686.1 L960 686 L963 687.5 L966 686.5 L969 687.8 L972 687.7 L975 688.1 L978 688.4 L981 688 L984 688.5 L987 687.5 L990 688.8 L993 688.6 L996 689 L999 688.2 L1002 689.4 L1005 689.9 L1008 688.7 L1011 689.2 L1014 689.8 L1017 690.3 L1020 689.6 L1023 689.6 L1026 689.9 L1029 690.6 L1032 691 L1035 690.6 L1038 690.7 L1041 690.9 L1044 691 L1047 691.3 L1050 690.9 L1053 691.6 L1056 692.4 L1059 691.6 L1062 692.1 L1065 691.3 L1068 692.1 L1071 692.3 L1074 692.2 L1077 692 L1080 692 L1083 692.2 L1086 692.7 L1089 691.6 L1092 691.5 L1095 692.6 L1098 692.9 L1101 692.3 L1104 692.2 L1107 692.7 L1110 691.9 L1113 692.1 L1116 692 L1119 692.6 L1122 692.3 L1125 692.2 L1128 692.9 L1131 693.4 L1134 692.4 L1137 693.1 L1140 692.6 L1143 693.4 L1146 693 L1149 692.5 L1152 692.5 L1155 692.2 L1158 693 L1161 692.9 L1164 692.6 L1167 692.9 L1170 692.9 L1173 693.6 L1176 692.7 L1179 694.1 L1182 693.3 L1185 693.5 L1188 693.4 L1191 694 L1194 694 L1197 693.6 L1200 694 L1200 800 L0 800 Z" fill="url(#gl)"/>
<path d="M0 741.2 L3 741.4 L6 742.2 L9 741 L12 741 L15 741.1 L18 740 L21 740.8 L24 741 L27 741.3 L30 739.4 L33 739.9 L36 739.3 L39 741.1 L42 740.7 L45 738.9 L48 741.3 L51 741.1 L54 740.3 L57 740.1 L60 738.8 L63 738.4 L66 739.6 L69 738.3 L72 738.6 L75 738.6 L78 738 L81 739 L84 738.9 L87 739.9 L90 738.9 L93 739.2 L96 738.7 L99 739.1 L102 738.5 L105 737.9 L108 739.7 L111 739.6 L114 739.1 L117 738.7 L120 737.6 L123 737.3 L126 737.4 L129 736.7 L132 738.5 L135 737.4 L138 738.5 L141 737.2 L144 738.7 L147 738.3 L150 736 L153 736.6 L156 738.5 L159 737.4 L162 738.8 L165 737.3 L168 736.5 L171 738.1 L174 738.5 L177 737.2 L180 736.8 L183 737.5 L186 739.2 L189 738.8 L192 737.1 L195 737.5 L198 737.2 L201 737.2 L204 739.2 L207 737.6 L210 738.7 L213 738.4 L216 737.8 L219 739.3 L222 737.8 L225 739.2 L228 737.9 L231 738.7 L234 738.2 L237 738.4 L240 740.3 L243 739.9 L246 738.7 L249 740.3 L252 738.6 L255 739.1 L258 740.4 L261 739.9 L264 738.5 L267 740.9 L270 739 L273 739.1 L276 740.5 L279 739.4 L282 739.4 L285 738.9 L288 739 L291 740.3 L294 739.5 L297 740.5 L300 740 L303 740.2 L306 741.6 L309 740.4 L312 740.7 L315 741.5 L318 739.8 L321 739.8 L324 741.8 L327 741.6 L330 740.2 L333 740.1 L336 741.6 L339 742.1 L342 740.3 L346 742.3 L349 742.2 L352 741.5 L355 741.1 L358 740.3 L361 740.2 L364 742.6 L367 740.8 L370 742.1 L373 741 L376 742.5 L379 741.9 L382 741.2 L385 741 L388 742.4 L391 740.8 L394 741.3 L397 742.2 L400 743 L403 742.4 L406 741.6 L409 743.3 L412 741.5 L415 741.1 L418 741.8 L421 742.3 L424 741.4 L428 741.7 L431 742.3 L434 742.8 L437 741.8 L440 742.4 L443 743.8 L446 744.1 L449 743.3 L452 743.5 L455 743.3 L458 742.2 L461 741.9 L464 741.9 L467 744.3 L470 743.8 L473 744.6 L476 742.2 L479 743.8 L482 743.5 L485 744.2 L488 743.1 L491 745 L494 742.6 L497 743.9 L500 744.4 L503 744.9 L506 744.5 L509 744.5 L512 744.8 L515 745.2 L518 743.8 L521 744.7 L524 745.3 L528 745.3 L531 744.1 L534 745.2 L537 745.4 L540 744.7 L543 744.9 L546 744.3 L549 744.9 L552 745 L555 743.7 L558 745.2 L561 746.2 L564 745.9 L567 745.6 L570 744.7 L573 745.7 L576 745.4 L579 745 L582 746.1 L585 744.2 L588 746 L591 744.2 L594 745.7 L597 745.5 L600 744.9 L603 746.1 L606 745.7 L609 746 L612 746.9 L615 745.2 L618 744.6 L621 745.4 L624 746.4 L627 745.3 L630 745.2 L633 747.2 L636 746.6 L639 746.1 L642 747.3 L646 745.9 L649 746.8 L652 745.7 L655 746.3 L658 747.4 L661 747.7 L664 747.7 L667 746.4 L670 747 L673 746.3 L676 745.9 L679 746.9 L682 747.9 L685 747.9 L688 747.6 L691 748.3 L694 746.6 L697 746.4 L700 747.2 L703 746.8 L706 746.6 L709 747.2 L712 747.8 L715 747.5 L718 747.1 L721 748.5 L724 748.9 L727 747.5 L730 746.6 L733 746.5 L736 748.7 L739 746.6 L742 748.4 L745 748.1 L748 747.4 L751 748.7 L754 746.8 L757 747.1 L760 748 L763 746.9 L766 749 L769 747.5 L772 747.3 L775 747.1 L778 748.7 L781 748.2 L784 748.8 L787 748.9 L790 749.3 L793 749.7 L796 749.1 L799 747.8 L802 748.6 L805 747.9 L808 747.5 L811 748.7 L814 749.4 L817 748 L820 748.3 L823 748.5 L826 749.5 L829 749.1 L832 749.4 L835 749.8 L838 748.9 L841 749.9 L844 750.3 L847 748.2 L850 750.4 L853 749.9 L856 748.4 L859 749.3 L862 749.8 L865 750.6 L868 749.2 L871 749.8 L874 750.6 L877 750.4 L880 750.9 L883 749.6 L886 750.2 L889 749.1 L892 750.4 L895 750.7 L898 750.3 L901 750.5 L904 749.3 L907 751.1 L910 751.3 L913 751.4 L916 750.3 L919 751 L922 749.8 L925 751.4 L928 751.3 L931 750 L934 749.3 L937 750.3 L940 750.6 L943 751.2 L946 750.5 L949 749.4 L952 751.5 L955 749.6 L958 751.5 L961 749.9 L964 750.4 L967 751.6 L970 750 L973 750 L976 751 L979 751.6 L982 751.9 L985 751.6 L988 752.3 L991 751.2 L994 752.4 L997 750.2 L1000 750.6 L1003 751.4 L1006 750.8 L1009 752 L1012 751.8 L1015 751.6 L1018 752.4 L1021 751.7 L1024 751.1 L1027 751.4 L1030 752.6 L1033 752.8 L1036 751 L1039 752.7 L1042 753.1 L1045 752 L1048 752.1 L1051 751.2 L1054 752.1 L1057 752.1 L1060 752.4 L1063 750.9 L1066 753.4 L1069 752.3 L1072 752 L1075 753.1 L1078 752.5 L1081 752.4 L1084 752.9 L1087 751.3 L1090 752.6 L1093 752.3 L1096 753.8 L1099 753.7 L1102 752.1 L1105 752.6 L1108 751.8 L1111 752.6 L1114 753.6 L1117 753.9 L1120 752.8 L1123 752.5 L1126 752.2 L1129 753.3 L1132 754.2 L1135 752.1 L1138 753.9 L1141 751.9 L1144 752.4 L1147 752.6 L1150 753.8 L1153 752.9 L1156 753 L1159 753.7 L1162 752.4 L1165 754.1 L1168 752.6 L1171 753.6 L1174 753 L1177 752.9 L1180 753.8 L1183 753.6 L1186 753.5 L1189 753.6 L1192 753.9 L1195 753 L1198 753.2 L1201 754.3 L1204 754.4 L1207 754.1 L1210 755 L1213 754.4 L1216 755.1 L1219 753.5 L1222 754.9 L1225 755.1 L1228 755.4 L1231 753.9 L1234 753.9 L1237 755.6 L1240 753.8 L1243 755.8 L1246 755.6 L1249 753.7 L1252 754 L1255 755.3 L1258 754.1 L1261 753.7 L1264 755.7 L1267 754.7 L1270 755.7 L1273 754 L1276 754.7 L1279 755.5 L1282 753.8 L1285 754.3 L1288 755.6 L1291 756.2 L1294 756.4 L1297 754.3 L1300 755.3 L1303 756 L1306 755.4 L1309 755.9 L1312 754.7 L1315 754.4 L1318 754.5 L1321 754.4 L1324 755.8 L1327 755.7 L1330 755.9 L1333 754.8 L1336 755 L1339 755.1 L1342 756.7 L1345 757.2 L1348 757 L1351 754.9 L1354 754.9 L1357 757.2 L1360 756 L1363 756.8 L1366 755.7 L1369 756.1 L1372 756.3 L1375 756.1 L1378 756.6 L1381 755.1 L1384 756.9 L1387 757.4 L1390 755.7 L1393 756.4 L1396 757.2 L1399 756.4 L1402 755.9 L1405 755.8 L1408 756.8 L1411 755.5 L1414 757.8 L1417 757.6 L1420 757.4 L1423 757.9 L1426 757.3 L1429 756.8 L1432 757.3 L1435 757.1 L1438 758.4 L1441 758 L1444 756.6 L1447 758.3 L1450 758 L1450 800 L0 800 Z" fill="#1f2239"/>
<path d="M1000 704.1 L1003 704.7 L1006 705 L1009 705.7 L1012 704.4 L1015 705.4 L1018 700.1 L1021 702.5 L1024 705.2 L1027 703.4 L1030 704.8 L1033 700.1 L1036 702 L1039 700.6 L1042 702.3 L1045 702.4 L1048 699 L1051 700.1 L1054 700.3 L1057 704 L1060 703 L1063 699.3 L1066 703 L1069 699 L1072 701.7 L1075 698.7 L1078 697.9 L1081 702.9 L1084 698.9 L1087 698.9 L1090 703.2 L1093 702.5 L1096 699 L1099 702.8 L1102 700.3 L1105 701 L1108 698.1 L1111 702.3 L1114 700.7 L1117 702.3 L1120 701.7 L1123 698.1 L1126 698.4 L1129 697.2 L1132 697 L1135 696.4 L1138 697.7 L1141 699.3 L1144 695.7 L1147 699.6 L1150 697.5 L1153 697.2 L1156 700 L1159 697.8 L1162 696.7 L1165 697.5 L1168 698.7 L1171 694.7 L1174 699.9 L1177 694.2 L1180 698.3 L1183 698.7 L1186 693.7 L1189 698 L1192 695.4 L1195 696.5 L1198 693 L1201 693.1 L1204 693.7 L1207 698 L1210 693.4 L1213 696.6 L1216 697.4 L1219 697.3 L1222 693.7 L1225 693.6 L1228 694.4 L1231 695.7 L1234 691.7 L1237 695.2 L1240 695.4 L1243 695.6 L1246 690.6 L1249 695.8 L1252 690.6 L1255 691.9 L1258 693.3 L1261 695 L1264 691.4 L1267 694.7 L1270 692.3 L1273 690.8 L1276 690.6 L1279 689.7 L1282 688.9 L1285 689.2 L1288 692.2 L1291 693.8 L1294 688.8 L1297 687.9 L1300 693.3 L1303 690.4 L1306 689.4 L1309 688.2 L1312 690 L1315 691.1 L1318 688.7 L1321 688.3 L1324 685.9 L1327 690.7 L1330 685.3 L1333 687.7 L1336 689.5 L1339 685.1 L1342 688.4 L1345 689.4 L1348 687.3 L1352 688 L1355 683.8 L1358 685.4 L1361 683.5 L1364 687.4 L1367 683.9 L1370 684.6 L1373 687.5 L1376 686.4 L1379 686.9 L1382 683.6 L1385 683.6 L1388 684.7 L1391 683 L1394 681.7 L1397 682.1 L1400 680.4 L1403 681.2 L1406 684.3 L1409 683.6 L1412 681.1 L1415 679.9 L1418 678.4 L1421 676.5 L1424 677 L1427 679.5 L1430 679.5 L1433 676 L1436 678 L1439 677.4 L1442 675.9 L1445 674.6 L1448 674 L1451 670.6 L1454 671.5 L1457 667.9 L1460 668 L1463 668.5 L1466 667.7 L1469 665.1 L1472 668.6 L1476 666.5 L1479 665.8 L1482 662.1 L1485 664.9 L1488 662.9 L1492 665 L1495 663.5 L1498 665.2 L1501 663.9 L1504 664.1 L1507 660.8 L1510 661.8 L1513 661.7 L1516 661.5 L1519 658 L1522 660.2 L1525 659.7 L1528 658 L1531 659 L1534 658.2 L1537 654.9 L1540 654.3 L1543 651.5 L1546 654.7 L1549 654.6 L1552 651.2 L1555 651.7 L1558 651.2 L1561 650.6 L1564 646.6 L1567 649.5 L1570 647.6 L1573 647.4 L1576 645.4 L1579 646.1 L1582 646.5 L1585 645.1 L1588 645.1 L1591 640.5 L1594 640.8 L1597 641.9 L1600 642.6 L1603 639.5 L1606 641.7 L1609 640.9 L1612 636.9 L1615 638.8 L1618 636.8 L1621 635.2 L1624 635.1 L1627 635.6 L1630 634.2 L1633 633.7 L1636 632.2 L1639 634.1 L1642 633 L1645 634 L1648 633.5 L1651 631.1 L1654 634.6 L1657 629 L1660 630.9 L1663 629.8 L1666 630.2 L1669 628.1 L1672 632 L1675 628.9 L1678 626.6 L1681 629.6 L1684 626.2 L1687 628.4 L1690 626.9 L1693 627.9 L1696 629.8 L1699 628.7 L1702 626.1 L1705 628.1 L1708 626.8 L1711 624.9 L1714 623.3 L1718 625.7 L1721 625.2 L1724 627.2 L1727 627 L1730 624.6 L1733 622.8 L1736 625.7 L1739 620.2 L1742 620.5 L1745 622.9 L1748 622.9 L1751 619.9 L1754 622.4 L1757 623.7 L1760 620.3 L1763 620.4 L1766 618.9 L1769 619 L1772 622.7 L1775 618.9 L1778 622 L1781 621.4 L1784 619.3 L1787 617 L1790 621.2 L1793 618.3 L1796 617.7 L1799 617.1 L1802 620.9 L1805 617.9 L1808 616.6 L1811 617.7 L1814 615.5 L1817 618.4 L1820 617.3 L1823 616.3 L1826 619.1 L1829 619.3 L1832 614.4 L1835 617.4 L1838 615.8 L1841 619.3 L1844 618 L1847 614.5 L1850 614.2 L1853 613.1 L1856 617.6 L1859 613.2 L1862 614.6 L1865 613.4 L1868 614 L1871 613.4 L1874 613.8 L1877 609.8 L1880 613.1 L1883 610 L1886 611 L1889 609.5 L1892 609.1 L1895 610.4 L1898 609.9 L1901 609.2 L1904 611.4 L1908 610.4 L1911 607 L1914 608.2 L1917 609.3 L1920 611 L1920 800 L1000 800 Z" fill="url(#gr)"/>
<rect x="0" y="760" width="1920" height="181" fill="url(#water)" opacity="1"/><rect x="0" y="760" width="1920" height="181" fill="url(#lx)"/>
<g transform="rotate(-0.6 300 845)"><rect x="-20" y="750" width="1960" height="185" fill="url(#mist)" mask="url(#mm)"/></g>
<path d="M1120 939.3 L1123 939.1 L1126 937.5 L1129 936.4 L1132 932.6 L1135 931.1 L1138 929.2 L1142 927.9 L1145 928 L1148 924.3 L1151 924 L1154 921.4 L1157 920 L1160 918.9 L1163 918.7 L1166 916.4 L1169 912.8 L1172 912.2 L1175 910.2 L1178 911.1 L1182 909.4 L1185 907.8 L1188 906.3 L1191 904.5 L1194 903.7 L1197 901.6 L1200 898.3 L1203 899.2 L1206 896.8 L1210 896.7 L1213 894.9 L1216 893.4 L1219 892 L1222 891.2 L1226 889.7 L1229 887.9 L1232 889.2 L1235 889 L1238 889.5 L1241 888.5 L1244 887.9 L1247 888.5 L1251 886.3 L1254 888.1 L1257 887.2 L1260 886.2 L1263 886.2 L1266 887.2 L1269 886.2 L1272 886.8 L1275 887.2 L1278 886.4 L1281 885.4 L1285 886.5 L1288 885.6 L1291 885.5 L1294 885.2 L1297 885.7 L1300 884.6 L1303 886.5 L1306 887.4 L1309 885.4 L1312 886.5 L1315 887.1 L1318 884 L1321 884.2 L1324 886.4 L1327 886.4 L1330 885.7 L1333 883.9 L1336 884.7 L1339 886.2 L1342 886.1 L1345 885.8 L1348 883.6 L1352 885.7 L1355 884 L1358 885.1 L1361 883 L1364 885.8 L1367 884.4 L1370 884.8 L1373 882.9 L1376 884.2 L1379 884 L1382 883.9 L1385 883.1 L1388 884.2 L1391 882.8 L1394 882.6 L1397 882 L1400 883.7 L1403 881.9 L1406 882.3 L1409 881.9 L1412 883.9 L1415 883.7 L1418 883.8 L1421 882.1 L1424 883.6 L1427 883.3 L1430 882.6 L1433 882.4 L1437 885.8 L1440 882.9 L1443 883.6 L1446 883.6 L1449 884.8 L1452 883.1 L1455 884.6 L1458 884.3 L1461 886 L1464 883.2 L1467 884.4 L1470 885.1 L1473 886.9 L1476 885.6 L1479 885.7 L1482 886.6 L1485 885.6 L1488 884.9 L1492 886.7 L1495 888.3 L1498 888 L1501 886.6 L1504 888.3 L1507 889 L1510 887.3 L1513 888.9 L1516 888.6 L1519 888.7 L1522 889.4 L1526 889.6 L1529 890.6 L1532 890 L1535 891.7 L1538 891.2 L1541 894 L1544 893.9 L1548 892.4 L1551 895.5 L1554 894 L1557 895.5 L1560 896.3 L1563 895.9 L1566 896.2 L1569 897.1 L1572 896.5 L1575 899.3 L1578 897.2 L1581 900 L1584 898.3 L1587 899 L1590 899.7 L1593 898.9 L1596 899.6 L1599 900.8 L1602 901.5 L1605 903.4 L1608 904.1 L1611 901.3 L1614 903.4 L1617 902.4 L1620 905.1 L1623 903.9 L1626 906.2 L1629 905.4 L1632 904.4 L1635 904.4 L1638 905.6 L1641 908.1 L1644 906.1 L1647 907.6 L1650 907.7 L1653 908 L1656 909.9 L1659 908.3 L1662 910.4 L1665 910.7 L1668 912 L1671 911 L1674 912.7 L1677 911.5 L1680 912.3 L1683 913.4 L1686 915.1 L1689 916.2 L1692 914.5 L1695 915.5 L1698 917.7 L1702 919.6 L1705 919.6 L1708 919.7 L1711 922.9 L1714 921.6 L1717 921.8 L1720 922.6 L1723 924.5 L1726 928.9 L1729 928.8 L1732 932.8 L1736 935.3 L1739 937.8 L1742 939.1 L1745 941 Z" fill="#45476a" opacity="0.62" filter="url(#blur2)"/>
</svg><div id="topbar"><svg style="left:9px;top:7px" width="30" height="22" viewBox="0 0 30 22"><path d="M0 10.5L29 0 22 9.5z" fill="#fff"/><path d="M0 10.5L22 9.5 27 21z" fill="#e8e8f0"/><path d="M22 9.5l4 9.5-9-5z" fill="#b8b9c8"/></svg><span class="logo">AirDroid</span><div class="search"><svg style="left:7px;top:6px" width="13" height="13" viewBox="0 0 13 13"><path d="M1 .5L8 6.5 1 12.5z" fill="#35b6d8"/><path d="M1 .5L8 6.5 5.5 8.5z" fill="#5bd08a"/><path d="M1 12.5L8 6.5 12 6.5z" fill="#e6584d"/><path d="M5.5 4.5L12 6.5 8 6.5z" fill="#f5c242"/></svg><span>搜索</span></div><svg style="left:349px;top:9px" width="20" height="17" viewBox="0 0 20 17"><path d="M6.5 1L0 4.5l2.5 4.5 2.5-1.2V16h10V7.8l2.5 1.2L20 4.5 13.5 1c-.8 1.6-2 2.3-3.5 2.3S7.3 2.6 6.5 1z" fill="#fff"/></svg><svg style="left:380px;top:10px" width="20" height="16" viewBox="0 0 20 16"><path d="M0 1.5L8 8l8-6.5V13H0z" fill="#fff"/><path d="M1 0h14L8 5.8z" fill="#fff"/><path d="M16 8v7M12.5 11.5h7" stroke="#1d1f38" stroke-width="4"/><path d="M16 8.5v6M13 11.5h6" stroke="#fff" stroke-width="1.8"/></svg><svg style="left:412px;top:10px" width="16" height="16" viewBox="0 0 16 16"><path d="M3.5 .8C2.3 1.5 1.6 2.6 2 4.3c.9 4 4.2 8.2 8.3 10.6 1.5.9 2.9.7 3.8-.5l.7-1.1c.3-.5.2-1-.3-1.3l-2.4-1.6c-.5-.3-1-.2-1.3.2l-.9 1c-1.9-1.1-3.9-3.6-4.7-5.9l1.1-.7c.5-.3.6-.8.4-1.3L5.7 1.3C5.4.7 4.9.5 4.3.6z" fill="#fff"/></svg><svg style="left:440px;top:9px" width="18" height="18" viewBox="0 0 18 18"><path d="M9 1c.8 0 1.3.5 1.4 1.2 2.5.7 4.1 2.8 4.1 5.5v4.2l1.6 2c.3.4.1 1-.4 1H2.3c-.5 0-.7-.6-.4-1l1.6-2V7.7c0-2.7 1.6-4.8 4.1-5.5C7.7 1.5 8.2 1 9 1z" fill="#fff"/><path d="M7 15.5h4c0 1.2-.8 2-2 2s-2-.8-2-2z" fill="#fff"/></svg><svg style="left:470px;top:9px" width="19" height="18" viewBox="0 0 19 18"><path d="M2 12.5L11.5 3l3 3L5 15.5 1 16.5z" fill="#fff"/><path d="M12.5 2l1.5-1.5 3 3L15.5 5z" fill="#fff"/><path d="M9 16h8" stroke="#fff" stroke-width="1.8"/></svg><svg style="left:503px;top:9px" width="17" height="17" viewBox="0 0 17 17"><rect width="17" height="17" fill="#fff"/><text x="8.5" y="14" font-family="Liberation Sans,sans-serif" font-size="14.5" fill="#1d1f38" text-anchor="middle">A</text></svg><div class="abs" style="left:530px;top:5px;width:1px;height:24px;background:#4b4d66"></div><svg style="left:541px;top:9px" width="18" height="18" viewBox="0 0 18 18"><path d="M5.5 3.8A6.5 6.5 0 1 0 12.5 3.8" fill="none" stroke="#fff" stroke-width="2.2" stroke-linecap="round"/><path d="M9 1v7.5" stroke="#fff" stroke-width="2.2" stroke-linecap="round"/></svg></div><div class="dicon" style="left:8px;top:63px"><svg width="56" height="56" viewBox="0 0 56 56"><path d="M56 28L55.9 35.1L55.6 38.9L55 42L54.2 44.6L53.2 46.9L52 48.8L50.5 50.5L48.8 52L46.9 53.2L44.6 54.2L42 55L38.9 55.6L35.1 55.9L28 56L20.9 55.9L17.1 55.6L14 55L11.4 54.2L9.1 53.2L7.2 52L5.5 50.5L4 48.8L2.8 46.9L1.8 44.6L1 42L0.4 38.9L0.1 35.1L0 28L0.1 20.9L0.4 17.1L1 14L1.8 11.4L2.8 9.1L4 7.2L5.5 5.5L7.2 4L9.1 2.8L11.4 1.8L14 1L17.1 0.4L20.9 0.1L28 0L35.1 0.1L38.9 0.4L42 1L44.6 1.8L46.9 2.8L48.8 4L50.5 5.5L52 7.2L53.2 9.1L54.2 11.4L55 14L55.6 17.1L55.9 20.9Z" fill="#f0603f"/><circle cx="18" cy="19" r="3.6" fill="#fbd3c6"/><path d="M8 41 L20.5 26.5 L26 32.5 L33 23 L48.5 41 Z" fill="#fff"/><path d="M20.5 26.5 L26 32.5 L20 41 L33 41 L33 23 L26 32.5Z" fill="#f7c4b5" opacity=".55"/></svg><div class="lbl"><span>照片</span></div></div><div class="dicon" style="left:113px;top:63px"><svg width="56" height="56" viewBox="0 0 56 56"><path d="M56 28L55.9 35.1L55.6 38.9L55 42L54.2 44.6L53.2 46.9L52 48.8L50.5 50.5L48.8 52L46.9 53.2L44.6 54.2L42 55L38.9 55.6L35.1 55.9L28 56L20.9 55.9L17.1 55.6L14 55L11.4 54.2L9.1 53.2L7.2 52L5.5 50.5L4 48.8L2.8 46.9L1.8 44.6L1 42L0.4 38.9L0.1 35.1L0 28L0.1 20.9L0.4 17.1L1 14L1.8 11.4L2.8 9.1L4 7.2L5.5 5.5L7.2 4L9.1 2.8L11.4 1.8L14 1L17.1 0.4L20.9 0.1L28 0L35.1 0.1L38.9 0.4L42 1L44.6 1.8L46.9 2.8L48.8 4L50.5 5.5L52 7.2L53.2 9.1L54.2 11.4L55 14L55.6 17.1L55.9 20.9Z" fill="#4bc77c"/><path d="M15 14.5c-2.6 1.2-3.7 3.6-2.9 7 1.9 8 8.7 17.3 17.5 22.3 3.1 1.7 5.7 1.2 7.3-1.4l1.3-2.2c.5-.9.3-1.8-.6-2.4l-4.7-3c-.8-.5-1.7-.4-2.4.3l-1.7 1.8c-3.6-2.2-7.4-6.9-9-11.4l2.1-1.3c.8-.5 1.1-1.4.8-2.3l-2-5.4c-.4-1-1.2-1.4-2.2-1.2z" fill="#fff"/><path d="M29.5 15.5c5.5 1.5 9.3 5.6 10.8 11M30.5 21c3 1 5 3.1 5.8 6" stroke="#c9f1d9" stroke-width="1.8" fill="none" stroke-linecap="round"/></svg><div class="lbl"><span>通话记录</span></div></div><div class="dicon" style="left:218px;top:63px"><svg width="56" height="56" viewBox="0 0 56 56"><path d="M56 28L55.9 35.1L55.6 38.9L55 42L54.2 44.6L53.2 46.9L52 48.8L50.5 50.5L48.8 52L46.9 53.2L44.6 54.2L42 55L38.9 55.6L35.1 55.9L28 56L20.9 55.9L17.1 55.6L14 55L11.4 54.2L9.1 53.2L7.2 52L5.5 50.5L4 48.8L2.8 46.9L1.8 44.6L1 42L0.4 38.9L0.1 35.1L0 28L0.1 20.9L0.4 17.1L1 14L1.8 11.4L2.8 9.1L4 7.2L5.5 5.5L7.2 4L9.1 2.8L11.4 1.8L14 1L17.1 0.4L20.9 0.1L28 0L35.1 0.1L38.9 0.4L42 1L44.6 1.8L46.9 2.8L48.8 4L50.5 5.5L52 7.2L53.2 9.1L54.2 11.4L55 14L55.6 17.1L55.9 20.9Z" fill="#5586d8"/><rect x="14" y="14" width="12.5" height="12.5" rx="1" fill="#fff"/><rect x="30" y="14" width="12.5" height="12.5" rx="1" fill="#fff"/><rect x="14" y="30" width="12.5" height="12.5" rx="1" fill="#fff"/><rect x="30" y="30" width="12.5" height="12.5" rx="1" fill="#fff"/><path d="M30 42.5 L42.5 30 V42.5Z" fill="#dbe6f8"/></svg><div class="lbl"><span>应用程序</span></div></div><div class="dicon" style="left:8px;top:194px"><svg width="56" height="56" viewBox="0 0 56 56"><path d="M56 28L55.9 35.1L55.6 38.9L55 42L54.2 44.6L53.2 46.9L52 48.8L50.5 50.5L48.8 52L46.9 53.2L44.6 54.2L42 55L38.9 55.6L35.1 55.9L28 56L20.9 55.9L17.1 55.6L14 55L11.4 54.2L9.1 53.2L7.2 52L5.5 50.5L4 48.8L2.8 46.9L1.8 44.6L1 42L0.4 38.9L0.1 35.1L0 28L0.1 20.9L0.4 17.1L1 14L1.8 11.4L2.8 9.1L4 7.2L5.5 5.5L7.2 4L9.1 2.8L11.4 1.8L14 1L17.1 0.4L20.9 0.1L28 0L35.1 0.1L38.9 0.4L42 1L44.6 1.8L46.9 2.8L48.8 4L50.5 5.5L52 7.2L53.2 9.1L54.2 11.4L55 14L55.6 17.1L55.9 20.9Z" fill="#2ebcc2"/><path d="M28 13c8.3 0 15 6 15 13.4s-6.7 13.4-15 13.4c-.5 0-1 0-1.5-.1L24 44c-.6.8-1.3.6-1.3-.4v-4.9C17 36.7 13 32 13 26.4 13 19 19.7 13 28 13z" fill="#e9fafa"/><circle cx="21" cy="27" r="1.5" fill="#8ad6d9"/><circle cx="28" cy="27" r="1.5" fill="#8ad6d9"/><circle cx="35" cy="27" r="1.5" fill="#8ad6d9"/></svg><div class="lbl"><span>消息</span></div></div><div class="dicon" style="left:113px;top:194px"><svg width="56" height="56" viewBox="0 0 56 56"><path d="M56 28L55.9 35.1L55.6 38.9L55 42L54.2 44.6L53.2 46.9L52 48.8L50.5 50.5L48.8 52L46.9 53.2L44.6 54.2L42 55L38.9 55.6L35.1 55.9L28 56L20.9 55.9L17.1 55.6L14 55L11.4 54.2L9.1 53.2L7.2 52L5.5 50.5L4 48.8L2.8 46.9L1.8 44.6L1 42L0.4 38.9L0.1 35.1L0 28L0.1 20.9L0.4 17.1L1 14L1.8 11.4L2.8 9.1L4 7.2L5.5 5.5L7.2 4L9.1 2.8L11.4 1.8L14 1L17.1 0.4L20.9 0.1L28 0L35.1 0.1L38.9 0.4L42 1L44.6 1.8L46.9 2.8L48.8 4L50.5 5.5L52 7.2L53.2 9.1L54.2 11.4L55 14L55.6 17.1L55.9 20.9Z" fill="#fbb02f"/><rect x="17.5" y="11" width="29" height="30" rx="2" fill="#fde0a8" transform="rotate(7 32 26)"/><rect x="11" y="14" width="31" height="30" rx="2" fill="#fff" transform="rotate(-10 26.5 29)"/><circle cx="26.5" cy="24.5" r="3.4" fill="#fbb02f"/><path d="M19.5 36.5c.3-3.8 3.2-6.2 7.2-6.7 3.8-.4 6.9 1.4 7.7 5l-14.9 1.7z" fill="#fbb02f"/></svg><div class="lbl"><span>常用联系人</span></div></div><div class="dicon" style="left:218px;top:194px"><svg width="56" height="56" viewBox="0 0 56 56"><path d="M56 28L55.9 35.1L55.6 38.9L55 42L54.2 44.6L53.2 46.9L52 48.8L50.5 50.5L48.8 52L46.9 53.2L44.6 54.2L42 55L38.9 55.6L35.1 55.9L28 56L20.9 55.9L17.1 55.6L14 55L11.4 54.2L9.1 53.2L7.2 52L5.5 50.5L4 48.8L2.8 46.9L1.8 44.6L1 42L0.4 38.9L0.1 35.1L0 28L0.1 20.9L0.4 17.1L1 14L1.8 11.4L2.8 9.1L4 7.2L5.5 5.5L7.2 4L9.1 2.8L11.4 1.8L14 1L17.1 0.4L20.9 0.1L28 0L35.1 0.1L38.9 0.4L42 1L44.6 1.8L46.9 2.8L48.8 4L50.5 5.5L52 7.2L53.2 9.1L54.2 11.4L55 14L55.6 17.1L55.9 20.9Z" fill="#2ebcc2"/><path d="M28 10.5c7.8 0 13.5 5.7 13.5 13 0 6.8-7 14.6-11.9 20.2-.9 1-2.3 1-3.2 0C21.5 38.1 14.5 30.3 14.5 23.5c0-7.3 5.7-13 13.5-13z" fill="#fff"/><path d="M19.5 37 L36.5 37 L29.6 43.7 c-.9 1-2.3 1-3.2 0z" fill="#c4ecee"/><circle cx="28" cy="23" r="5.6" fill="#2ebcc2"/></svg><div class="lbl"><span>寻找手机</span></div></div><div class="dicon" style="left:8px;top:325px"><svg width="56" height="56" viewBox="0 0 56 56"><path d="M56 28L55.9 35.1L55.6 38.9L55 42L54.2 44.6L53.2 46.9L52 48.8L50.5 50.5L48.8 52L46.9 53.2L44.6 54.2L42 55L38.9 55.6L35.1 55.9L28 56L20.9 55.9L17.1 55.6L14 55L11.4 54.2L9.1 53.2L7.2 52L5.5 50.5L4 48.8L2.8 46.9L1.8 44.6L1 42L0.4 38.9L0.1 35.1L0 28L0.1 20.9L0.4 17.1L1 14L1.8 11.4L2.8 9.1L4 7.2L5.5 5.5L7.2 4L9.1 2.8L11.4 1.8L14 1L17.1 0.4L20.9 0.1L28 0L35.1 0.1L38.9 0.4L42 1L44.6 1.8L46.9 2.8L48.8 4L50.5 5.5L52 7.2L53.2 9.1L54.2 11.4L55 14L55.6 17.1L55.9 20.9Z" fill="#f2a332"/><path d="M12 16.5c0-1.4 1-2.5 2.4-2.5h8.7c1 0 1.6.4 2.3 1.1l1.6 1.9H41.6c1.4 0 2.4 1 2.4 2.4V39.6c0 1.4-1 2.4-2.4 2.4H14.4c-1.4 0-2.4-1-2.4-2.4z" fill="#fdebc8"/><path d="M12 22h32v17.6c0 1.4-1 2.4-2.4 2.4H14.4c-1.4 0-2.4-1-2.4-2.4z" fill="#fff"/></svg><div class="lbl"><span>文件</span></div></div><div class="dicon" style="left:113px;top:325px"><svg width="56" height="56" viewBox="0 0 56 56"><path d="M56 28L55.9 35.1L55.6 38.9L55 42L54.2 44.6L53.2 46.9L52 48.8L50.5 50.5L48.8 52L46.9 53.2L44.6 54.2L42 55L38.9 55.6L35.1 55.9L28 56L20.9 55.9L17.1 55.6L14 55L11.4 54.2L9.1 53.2L7.2 52L5.5 50.5L4 48.8L2.8 46.9L1.8 44.6L1 42L0.4 38.9L0.1 35.1L0 28L0.1 20.9L0.4 17.1L1 14L1.8 11.4L2.8 9.1L4 7.2L5.5 5.5L7.2 4L9.1 2.8L11.4 1.8L14 1L17.1 0.4L20.9 0.1L28 0L35.1 0.1L38.9 0.4L42 1L44.6 1.8L46.9 2.8L48.8 4L50.5 5.5L52 7.2L53.2 9.1L54.2 11.4L55 14L55.6 17.1L55.9 20.9Z" fill="#3cb7fb"/><rect x="16" y="13" width="26" height="30" rx="1.5" fill="#fff"/><rect x="16" y="13" width="4" height="30" fill="#cdeafd"/><circle cx="30.5" cy="24" r="3.4" fill="#3cb7fb"/><path d="M23.5 35c.5-4 3.3-5.8 7-5.8s6.5 1.8 7 5.8z" fill="#3cb7fb"/></svg><div class="lbl"><span>联系人</span></div></div><div class="dicon" style="left:218px;top:325px"><svg width="56" height="56" viewBox="0 0 56 56"><path d="M56 28L55.9 35.1L55.6 38.9L55 42L54.2 44.6L53.2 46.9L52 48.8L50.5 50.5L48.8 52L46.9 53.2L44.6 54.2L42 55L38.9 55.6L35.1 55.9L28 56L20.9 55.9L17.1 55.6L14 55L11.4 54.2L9.1 53.2L7.2 52L5.5 50.5L4 48.8L2.8 46.9L1.8 44.6L1 42L0.4 38.9L0.1 35.1L0 28L0.1 20.9L0.4 17.1L1 14L1.8 11.4L2.8 9.1L4 7.2L5.5 5.5L7.2 4L9.1 2.8L11.4 1.8L14 1L17.1 0.4L20.9 0.1L28 0L35.1 0.1L38.9 0.4L42 1L44.6 1.8L46.9 2.8L48.8 4L50.5 5.5L52 7.2L53.2 9.1L54.2 11.4L55 14L55.6 17.1L55.9 20.9Z" fill="#3cb7fb"/><text x="28" y="42" font-family="Liberation Sans, sans-serif" font-weight="bold" font-size="38" fill="#fff" text-anchor="middle">?</text></svg><div class="lbl"><span>帮助</span></div></div><div class="dicon" style="left:8px;top:456px"><svg width="56" height="56" viewBox="0 0 56 56"><path d="M56 28L55.9 35.1L55.6 38.9L55 42L54.2 44.6L53.2 46.9L52 48.8L50.5 50.5L48.8 52L46.9 53.2L44.6 54.2L42 55L38.9 55.6L35.1 55.9L28 56L20.9 55.9L17.1 55.6L14 55L11.4 54.2L9.1 53.2L7.2 52L5.5 50.5L4 48.8L2.8 46.9L1.8 44.6L1 42L0.4 38.9L0.1 35.1L0 28L0.1 20.9L0.4 17.1L1 14L1.8 11.4L2.8 9.1L4 7.2L5.5 5.5L7.2 4L9.1 2.8L11.4 1.8L14 1L17.1 0.4L20.9 0.1L28 0L35.1 0.1L38.9 0.4L42 1L44.6 1.8L46.9 2.8L48.8 4L50.5 5.5L52 7.2L53.2 9.1L54.2 11.4L55 14L55.6 17.1L55.9 20.9Z" fill="#6e8b99"/><path d="M11 20.5c0-1.4 1-2.5 2.5-2.5h5l2-3.5h15l2 3.5h5c1.4 0 2.5 1 2.5 2.5V39.5c0 1.4-1 2.5-2.5 2.5h-29c-1.4 0-2.5-1-2.5-2.5z" fill="#fff"/><path d="M11 21h34" stroke="#dfe6ea" stroke-width="1.2"/><circle cx="28" cy="31.5" r="6.8" fill="#6e8b99"/><circle cx="28" cy="31.5" r="4.2" fill="#c5d3da"/></svg><div class="lbl"><span>相机</span></div></div><div class="dicon" style="left:113px;top:456px"><svg width="56" height="56" viewBox="0 0 56 56"><path d="M56 28L55.9 35.1L55.6 38.9L55 42L54.2 44.6L53.2 46.9L52 48.8L50.5 50.5L48.8 52L46.9 53.2L44.6 54.2L42 55L38.9 55.6L35.1 55.9L28 56L20.9 55.9L17.1 55.6L14 55L11.4 54.2L9.1 53.2L7.2 52L5.5 50.5L4 48.8L2.8 46.9L1.8 44.6L1 42L0.4 38.9L0.1 35.1L0 28L0.1 20.9L0.4 17.1L1 14L1.8 11.4L2.8 9.1L4 7.2L5.5 5.5L7.2 4L9.1 2.8L11.4 1.8L14 1L17.1 0.4L20.9 0.1L28 0L35.1 0.1L38.9 0.4L42 1L44.6 1.8L46.9 2.8L48.8 4L50.5 5.5L52 7.2L53.2 9.1L54.2 11.4L55 14L55.6 17.1L55.9 20.9Z" fill="#5586d8"/><path d="M20.5 15.5c0-2 1.6-2.8 3.2-1.8L41 25.5c1.6 1 1.6 3 0 4L23.7 41.3c-1.6 1-3.2.2-3.2-1.8z" fill="#fff"/><path d="M20.5 30 L32 35.5 23.7 41.3c-1.6 1-3.2.2-3.2-1.8z" fill="#cfdcf4"/></svg><div class="lbl"><span>视频</span></div></div><div class="dicon" style="left:218px;top:456px"><svg width="56" height="56" viewBox="0 0 56 56"><path d="M56 28L55.9 35.1L55.6 38.9L55 42L54.2 44.6L53.2 46.9L52 48.8L50.5 50.5L48.8 52L46.9 53.2L44.6 54.2L42 55L38.9 55.6L35.1 55.9L28 56L20.9 55.9L17.1 55.6L14 55L11.4 54.2L9.1 53.2L7.2 52L5.5 50.5L4 48.8L2.8 46.9L1.8 44.6L1 42L0.4 38.9L0.1 35.1L0 28L0.1 20.9L0.4 17.1L1 14L1.8 11.4L2.8 9.1L4 7.2L5.5 5.5L7.2 4L9.1 2.8L11.4 1.8L14 1L17.1 0.4L20.9 0.1L28 0L35.1 0.1L38.9 0.4L42 1L44.6 1.8L46.9 2.8L48.8 4L50.5 5.5L52 7.2L53.2 9.1L54.2 11.4L55 14L55.6 17.1L55.9 20.9Z" fill="#ee5a3b"/><circle cx="28" cy="27" r="13.5" fill="#fde4de"/><path d="M18 20c3-1 5.5 0 6.5 2s-1 4.5-3.3 5.5-4.5 0-5.5-2M31 15c2.2 1 3.3 3.3 2.2 5.5s-3.3 2.2-4.4 0M30 32c2.2-1 5.5 0 5.5 2.2s-2.2 4.4-4.4 4.4-2.2-4.4-1.1-6.6z" fill="#f6b7a8"/><path d="M12 30.5c-5.5 3-7.2 5.7-6.2 7.2 1.8 2.7 12.8.2 24.7-5.8s20.2-12.7 18.4-15.4c-.9-1.3-3.5-1.1-7.3 0" stroke="#fde4de" stroke-width="2.8" fill="none" stroke-linecap="round"/></svg><div class="lbl"><span>发现</span></div></div><div class="dicon" style="left:8px;top:587px"><svg width="56" height="56" viewBox="0 0 56 56"><path d="M56 28L55.9 35.1L55.6 38.9L55 42L54.2 44.6L53.2 46.9L52 48.8L50.5 50.5L48.8 52L46.9 53.2L44.6 54.2L42 55L38.9 55.6L35.1 55.9L28 56L20.9 55.9L17.1 55.6L14 55L11.4 54.2L9.1 53.2L7.2 52L5.5 50.5L4 48.8L2.8 46.9L1.8 44.6L1 42L0.4 38.9L0.1 35.1L0 28L0.1 20.9L0.4 17.1L1 14L1.8 11.4L2.8 9.1L4 7.2L5.5 5.5L7.2 4L9.1 2.8L11.4 1.8L14 1L17.1 0.4L20.9 0.1L28 0L35.1 0.1L38.9 0.4L42 1L44.6 1.8L46.9 2.8L48.8 4L50.5 5.5L52 7.2L53.2 9.1L54.2 11.4L55 14L55.6 17.1L55.9 20.9Z" fill="#4bc77c"/><path d="M18 16h7l1.5 11h3L31 16h7l5 13H13z" fill="#d4f5e1"/><circle cx="18.5" cy="33" r="8.2" fill="#e9fbf0"/><circle cx="37.5" cy="33" r="8.2" fill="#e9fbf0"/><circle cx="18.5" cy="33" r="5.2" fill="#6fd597"/><circle cx="37.5" cy="33" r="5.2" fill="#6fd597"/><rect x="25" y="27.5" width="6" height="5" fill="#e9fbf0"/></svg><div class="lbl"><span>远程控制</span></div></div><div class="dicon" style="left:113px;top:587px"><svg width="56" height="56" viewBox="0 0 56 56"><path d="M56 28L55.9 35.1L55.6 38.9L55 42L54.2 44.6L53.2 46.9L52 48.8L50.5 50.5L48.8 52L46.9 53.2L44.6 54.2L42 55L38.9 55.6L35.1 55.9L28 56L20.9 55.9L17.1 55.6L14 55L11.4 54.2L9.1 53.2L7.2 52L5.5 50.5L4 48.8L2.8 46.9L1.8 44.6L1 42L0.4 38.9L0.1 35.1L0 28L0.1 20.9L0.4 17.1L1 14L1.8 11.4L2.8 9.1L4 7.2L5.5 5.5L7.2 4L9.1 2.8L11.4 1.8L14 1L17.1 0.4L20.9 0.1L28 0L35.1 0.1L38.9 0.4L42 1L44.6 1.8L46.9 2.8L48.8 4L50.5 5.5L52 7.2L53.2 9.1L54.2 11.4L55 14L55.6 17.1L55.9 20.9Z" fill="#796fd6"/><path d="M21.5 16.5 L41.5 11.5 V35h-3.4V19.3L24.9 22.5v16.5h-3.4z" fill="#fff"/><path d="M24.9 17.5 L41.5 12.5v5L24.9 22.5z" fill="#d9d5f5"/><ellipse cx="19.5" cy="39" rx="5.8" ry="4.5" fill="#fff"/><ellipse cx="36" cy="35.5" rx="5.8" ry="4.5" fill="#fff"/></svg><div class="lbl"><span>音乐</span></div></div><div class="dicon" style="left:8px;top:718px"><svg width="56" height="56" viewBox="0 0 56 56"><path d="M56 28L55.9 35.1L55.6 38.9L55 42L54.2 44.6L53.2 46.9L52 48.8L50.5 50.5L48.8 52L46.9 53.2L44.6 54.2L42 55L38.9 55.6L35.1 55.9L28 56L20.9 55.9L17.1 55.6L14 55L11.4 54.2L9.1 53.2L7.2 52L5.5 50.5L4 48.8L2.8 46.9L1.8 44.6L1 42L0.4 38.9L0.1 35.1L0 28L0.1 20.9L0.4 17.1L1 14L1.8 11.4L2.8 9.1L4 7.2L5.5 5.5L7.2 4L9.1 2.8L11.4 1.8L14 1L17.1 0.4L20.9 0.1L28 0L35.1 0.1L38.9 0.4L42 1L44.6 1.8L46.9 2.8L48.8 4L50.5 5.5L52 7.2L53.2 9.1L54.2 11.4L55 14L55.6 17.1L55.9 20.9Z" fill="#3cb7fb"/><path d="M18 12c-.9 2.2-.7 4.4.4 6.6L31.8 37.5l3.2-2.4z" fill="#e7f6ff"/><path d="M38 12c.9 2.2.7 4.4-.4 6.6L24.2 37.5l-3.2-2.4z" fill="#fff"/><circle cx="18" cy="39" r="4.5" fill="none" stroke="#fff" stroke-width="3"/><circle cx="38" cy="39" r="4.5" fill="none" stroke="#fff" stroke-width="3"/></svg><div class="lbl"><span>屏幕镜像</span></div></div><div class="dicon" style="left:113px;top:718px"><svg width="56" height="56" viewBox="0 0 56 56"><path d="M56 28L55.9 35.1L55.6 38.9L55 42L54.2 44.6L53.2 46.9L52 48.8L50.5 50.5L48.8 52L46.9 53.2L44.6 54.2L42 55L38.9 55.6L35.1 55.9L28 56L20.9 55.9L17.1 55.6L14 55L11.4 54.2L9.1 53.2L7.2 52L5.5 50.5L4 48.8L2.8 46.9L1.8 44.6L1 42L0.4 38.9L0.1 35.1L0 28L0.1 20.9L0.4 17.1L1 14L1.8 11.4L2.8 9.1L4 7.2L5.5 5.5L7.2 4L9.1 2.8L11.4 1.8L14 1L17.1 0.4L20.9 0.1L28 0L35.1 0.1L38.9 0.4L42 1L44.6 1.8L46.9 2.8L48.8 4L50.5 5.5L52 7.2L53.2 9.1L54.2 11.4L55 14L55.6 17.1L55.9 20.9Z" fill="#f0603f"/><path d="M28 11c1.5 0 2.6 1 2.8 2.5 5 1.3 8.2 5.5 8.2 11v8.5l3.2 4c.6.8.2 2-.9 2H14.7c-1.1 0-1.5-1.2-.9-2l3.2-4V24.5c0-5.5 3.2-9.7 8.2-11 .2-1.5 1.3-2.5 2.8-2.5z" fill="#fff"/><path d="M24 41h8c0 2.3-1.7 4-4 4s-4-1.7-4-4z" fill="#fbd0c5"/></svg><div class="lbl"><span>铃声</span></div></div><div id="win"><div class="title"><span class="abs" style="left:7px;top:6px;width:18px;height:18px"><svg width="18" height="18" viewBox="0 0 56 56"><path d="M56 28L55.9 35.1L55.6 38.9L55 42L54.2 44.6L53.2 46.9L52 48.8L50.5 50.5L48.8 52L46.9 53.2L44.6 54.2L42 55L38.9 55.6L35.1 55.9L28 56L20.9 55.9L17.1 55.6L14 55L11.4 54.2L9.1 53.2L7.2 52L5.5 50.5L4 48.8L2.8 46.9L1.8 44.6L1 42L0.4 38.9L0.1 35.1L0 28L0.1 20.9L0.4 17.1L1 14L1.8 11.4L2.8 9.1L4 7.2L5.5 5.5L7.2 4L9.1 2.8L11.4 1.8L14 1L17.1 0.4L20.9 0.1L28 0L35.1 0.1L38.9 0.4L42 1L44.6 1.8L46.9 2.8L48.8 4L50.5 5.5L52 7.2L53.2 9.1L54.2 11.4L55 14L55.6 17.1L55.9 20.9Z" fill="#f2a332"/><path d="M12 16.5c0-1.4 1-2.5 2.4-2.5h8.7c1 0 1.6.4 2.3 1.1l1.6 1.9H41.6c1.4 0 2.4 1 2.4 2.4V39.6c0 1.4-1 2.4-2.4 2.4H14.4c-1.4 0-2.4-1-2.4-2.4z" fill="#fdebc8"/><path d="M12 22h32v17.6c0 1.4-1 2.4-2.4 2.4H14.4c-1.4 0-2.4-1-2.4-2.4z" fill="#fff"/></svg></span><span class="t">文件</span><svg class="abs" style="left:903px;top:8px" width="60" height="14" viewBox="0 0 60 14"><path d="M3 10.5h9" stroke="#59606e" stroke-width="1.8"/><rect x="24.5" y="3.5" width="8" height="8" fill="none" stroke="#59606e" stroke-width="1.3"/><path d="M24 3.7h9" stroke="#59606e" stroke-width="1.7"/><path d="M45.5 4l7 7M52.5 4l-7 7" stroke="#535a68" stroke-width="1.6"/></svg></div><div class="tb"><div class="abs" style="left:12px;top:6px;width:160px;height:23px;background:#fff;border:1px solid #d6d6d6;border-right:0"><span class="abs" style="left:5px;top:0;line-height:22px;font-size:13px;color:#777">搜索</span></div><div class="abs" style="left:172px;top:6px;width:27px;height:23px;background:linear-gradient(#fafafa,#ececec);border:1px solid #d0d0d0"><svg class="abs" style="left:4px;top:1px" width="18" height="18" viewBox="0 0 18 18"><circle cx="7.5" cy="7.5" r="4.8" fill="none" stroke="#5f7088" stroke-width="1.7"/><path d="M11 11l4.5 4.5" stroke="#5f7088" stroke-width="2.2" stroke-linecap="round"/></svg></div><div class="abs" style="left:223px;top:7px;width:32px;height:23px;background:#fff;border:1px solid #d4d4d4;border-right:0"><svg class="abs" style="left:8px;top:5px" width="14" height="12" viewBox="0 0 14 12"><g fill="#5d6b82"><rect x="0" y="1" width="2" height="2"/><rect x="4" y="1" width="9" height="2"/><rect x="0" y="5" width="2" height="2"/><rect x="4" y="5" width="9" height="2"/><rect x="0" y="9" width="2" height="2"/><rect x="4" y="9" width="9" height="2"/></g></svg></div><div class="abs" style="left:254px;top:7px;width:33px;height:23px;background:#e9f3fd;border:1px solid #2f6fc6"><svg class="abs" style="left:9px;top:4px" width="13" height="13" viewBox="0 0 13 13"><g fill="#2a63c0"><rect x="0" y="1" width="5" height="4"/><rect x="7" y="1" width="5" height="4"/><rect x="0" y="7" width="5" height="4"/><rect x="7" y="7" width="5" height="4"/></g></svg></div><svg class="abs" style="left:298px;top:9px" width="18" height="18" viewBox="0 0 18 18"><path d="M14.2 9.5a5.4 5.4 0 1 1-3.4-5.2" fill="none" stroke="#6a7890" stroke-width="1.9"/><path d="M8.5 0.5l4.3 3.3-4.6 2.7z" fill="#6a7890"/></svg><div class="abs" style="left:327px;top:8px;width:1px;height:20px;background:#d8d8d8"></div><svg class="abs" style="left:338px;top:9px" width="20" height="18" viewBox="0 0 20 18"><path d="M1 3c0-.8.5-1.3 1.3-1.3h4.5l1.5 1.8h7.4c.8 0 1.3.5 1.3 1.3v8.5c0 .8-.5 1.3-1.3 1.3H2.3C1.5 14.6 1 14.1 1 13.3z" fill="#7080a0"/><path d="M1 6.5h16" stroke="#f6f7f8" stroke-width="1"/><path d="M15.5 11v6M12.5 14h6" stroke="#f6f7f8" stroke-width="3.4"/><path d="M15.5 11.5v5M13 14h5" stroke="#566684" stroke-width="1.6"/></svg><svg class="abs" style="left:366px;top:9px" width="22" height="18" viewBox="0 0 22 18"><rect x="1.5" y="5" width="14" height="8" fill="none" stroke="#c9cdd3" stroke-width="1.2"/><path d="M4 7.5h3v3H4zM9 7.5h3M9 9h3M9 10.5h3" stroke="#c9cdd3" stroke-width="1" fill="none"/><path d="M14 1.5h6M17 1.5v15M14 16.5h6" stroke="#c9cdd3" stroke-width="1.4" fill="none"/></svg><svg class="abs" style="left:396px;top:9px" width="18" height="18" viewBox="0 0 18 18"><path d="M4 1l8 12M14 1L6 13" stroke="#c9cdd3" stroke-width="1.6" fill="none"/><circle cx="4.5" cy="14.5" r="2.3" fill="none" stroke="#c9cdd3" stroke-width="1.5"/><circle cx="13.5" cy="14.5" r="2.3" fill="none" stroke="#c9cdd3" stroke-width="1.5"/></svg><svg class="abs" style="left:425px;top:9px" width="18" height="18" viewBox="0 0 18 18"><rect x="2" y="2" width="10" height="12" rx="1" fill="#dfe2e6" stroke="#c9cdd3" stroke-width="1.2"/><rect x="5.5" y="4.5" width="10" height="12" rx="1" fill="#e6e8eb" stroke="#c9cdd3" stroke-width="1.2"/></svg><svg class="abs" style="left:454px;top:8px" width="18" height="19" viewBox="0 0 18 19"><rect x="3" y="3" width="12" height="14.5" rx="1" fill="#e3e5e8" stroke="#c9cdd3" stroke-width="1.3"/><rect x="6" y="1.5" width="6" height="3" fill="#c9cdd3"/><path d="M5.5 8h7M5.5 10.5h7M5.5 13h7" stroke="#c9cdd3" stroke-width="1"/></svg><svg class="abs" style="left:483px;top:9px" width="18" height="18" viewBox="0 0 18 18"><circle cx="9" cy="9" r="7.3" fill="#eceef0" stroke="#c9cdd3" stroke-width="1.5"/><path d="M9 5v8" stroke="#c9cdd3" stroke-width="1.8"/></svg><svg class="abs" style="left:513px;top:8px" width="20" height="20" viewBox="0 0 20 20"><path d="M10 2.2l2.4 5 5.4.700-4 3.8 1 5.4L10 14.5l-4.8 2.6 1-5.4-4-3.8 5.4-.700z" fill="#e4e6e9" stroke="#8d939c" stroke-width="1.5" stroke-linejoin="round"/></svg><div class="abs" style="left:543px;top:8px;width:1px;height:20px;background:#d8d8d8"></div><svg class="abs" style="left:554px;top:8px" width="16" height="20" viewBox="0 0 16 20"><path d="M1 4.5h14M5.5 4V2h5v2" stroke="#c9cdd3" stroke-width="1.6" fill="none"/><path d="M2.5 6h11v11c0 .8-.5 1.3-1.3 1.3H3.8c-.8 0-1.3-.5-1.3-1.3z" fill="#c9cdd3"/><path d="M5.5 8v8M8 8v8M10.5 8v8" stroke="#e3e5e8" stroke-width="1"/></svg><div class="btn" style="left:725px;top:5px;width:55px;background:#fff;border:1px solid #dcdcdc;color:#c8c8c8;line-height:25px">下载</div><div class="btn blue" style="left:784px;top:5px;width:80px">上传文件</div><div class="btn blue" style="left:868px;top:5px;width:92px">上传文件夹</div></div><div class="pb"><svg class="abs" style="left:10px;top:8px" width="50" height="15" viewBox="0 0 50 15"><g stroke="#b3bfcc" stroke-width="2" fill="none"><path d="M15 7.5H3M8 2.5L3 7.5l5 5"/><path d="M33 7.5h12M40 2.5l5 5-5 5"/></g></svg><span class="abs" style="left:70px;top:0;line-height:30px;font-size:13px;color:#5f6b7c">SD卡 <span style="color:#b0b8c4">/</span></span></div><div class="tree"><div class="trow" style="top:2px"><i></i><svg width="18" height="20" viewBox="0 0 36 36"><path d="M0 2.5C0 1 1 0 2.5 0H12.5c1.2 0 1.8.4 2.6 1.4L17.5 4.5H33.5C35 4.5 36 5.5 36 7V33.5c0 1.5-1 2.5-2.5 2.5H2.5C1 36 0 35 0 33.5z" fill="#f7aa3e"/><rect x="1.5" y="7" width="33" height="4" fill="#fffbe8"/><path d="M0 10.5H36V33.5c0 1.5-1 2.5-2.5 2.5H2.5C1 36 0 35 0 33.5z" fill="#f6c251"/></svg><span>bytedance</span></div><div class="trow" style="top:26.1px"><svg width="18" height="20" viewBox="0 0 36 36"><path d="M0 2.5C0 1 1 0 2.5 0H12.5c1.2 0 1.8.4 2.6 1.4L17.5 4.5H33.5C35 4.5 36 5.5 36 7V33.5c0 1.5-1 2.5-2.5 2.5H2.5C1 36 0 35 0 33.5z" fill="#f7aa3e"/><rect x="1.5" y="7" width="33" height="4" fill="#fffbe8"/><path d="M0 10.5H36V33.5c0 1.5-1 2.5-2.5 2.5H2.5C1 36 0 35 0 33.5z" fill="#f6c251"/></svg><span>ByteDownload</span></div><div class="trow" style="top:50.1px"><i></i><svg width="18" height="20" viewBox="0 0 36 36"><path d="M0 2.5C0 1 1 0 2.5 0H12.5c1.2 0 1.8.4 2.6 1.4L17.5 4.5H33.5C35 4.5 36 5.5 36 7V33.5c0 1.5-1 2.5-2.5 2.5H2.5C1 36 0 35 0 33.5z" fill="#f7aa3e"/><rect x="1.5" y="7" width="33" height="4" fill="#fffbe8"/><path d="M0 10.5H36V33.5c0 1.5-1 2.5-2.5 2.5H2.5C1 36 0 35 0 33.5z" fill="#f6c251"/></svg><span>cache</span></div><div class="trow" style="top:74.2px"><i></i><svg width="18" height="20" viewBox="0 0 36 36"><path d="M0 2.5C0 1 1 0 2.5 0H12.5c1.2 0 1.8.4 2.6 1.4L17.5 4.5H33.5C35 4.5 36 5.5 36 7V33.5c0 1.5-1 2.5-2.5 2.5H2.5C1 36 0 35 0 33.5z" fill="#f7aa3e"/><rect x="1.5" y="7" width="33" height="4" fill="#fffbe8"/><path d="M0 10.5H36V33.5c0 1.5-1 2.5-2.5 2.5H2.5C1 36 0 35 0 33.5z" fill="#f6c251"/></svg><span>CCDownload</span></div><div class="trow" style="top:98.2px"><svg width="18" height="20" viewBox="0 0 36 36"><path d="M0 2.5C0 1 1 0 2.5 0H12.5c1.2 0 1.8.4 2.6 1.4L17.5 4.5H33.5C35 4.5 36 5.5 36 7V33.5c0 1.5-1 2.5-2.5 2.5H2.5C1 36 0 35 0 33.5z" fill="#f7aa3e"/><rect x="1.5" y="7" width="33" height="4" fill="#fffbe8"/><path d="M0 10.5H36V33.5c0 1.5-1 2.5-2.5 2.5H2.5C1 36 0 35 0 33.5z" fill="#f6c251"/></svg><span>ccvoice</span></div><div class="trow" style="top:122.2px"><i></i><svg width="18" height="20" viewBox="0 0 36 36"><path d="M0 2.5C0 1 1 0 2.5 0H12.5c1.2 0 1.8.4 2.6 1.4L17.5 4.5H33.5C35 4.5 36 5.5 36 7V33.5c0 1.5-1 2.5-2.5 2.5H2.5C1 36 0 35 0 33.5z" fill="#f7aa3e"/><rect x="1.5" y="7" width="33" height="4" fill="#fffbe8"/><path d="M0 10.5H36V33.5c0 1.5-1 2.5-2.5 2.5H2.5C1 36 0 35 0 33.5z" fill="#f6c251"/></svg><span>cn.xiaochuankeji.ti...</span></div><div class="trow" style="top:146.3px"><i></i><svg width="18" height="20" viewBox="0 0 36 36"><path d="M0 2.5C0 1 1 0 2.5 0H12.5c1.2 0 1.8.4 2.6 1.4L17.5 4.5H33.5C35 4.5 36 5.5 36 7V33.5c0 1.5-1 2.5-2.5 2.5H2.5C1 36 0 35 0 33.5z" fill="#f7aa3e"/><rect x="1.5" y="7" width="33" height="4" fill="#fffbe8"/><path d="M0 10.5H36V33.5c0 1.5-1 2.5-2.5 2.5H2.5C1 36 0 35 0 33.5z" fill="#f6c251"/></svg><span>cn.xiaochuankeji.z...</span></div><div class="trow" style="top:170.3px"><i></i><svg width="18" height="20" viewBox="0 0 36 36"><path d="M0 2.5C0 1 1 0 2.5 0H12.5c1.2 0 1.8.4 2.6 1.4L17.5 4.5H33.5C35 4.5 36 5.5 36 7V33.5c0 1.5-1 2.5-2.5 2.5H2.5C1 36 0 35 0 33.5z" fill="#f7aa3e"/><rect x="1.5" y="7" width="33" height="4" fill="#fffbe8"/><path d="M0 10.5H36V33.5c0 1.5-1 2.5-2.5 2.5H2.5C1 36 0 35 0 33.5z" fill="#f6c251"/></svg><span>com.hicorenationa...</span></div><div class="trow" style="top:194.4px"><svg width="18" height="20" viewBox="0 0 36 36"><path d="M0 2.5C0 1 1 0 2.5 0H12.5c1.2 0 1.8.4 2.6 1.4L17.5 4.5H33.5C35 4.5 36 5.5 36 7V33.5c0 1.5-1 2.5-2.5 2.5H2.5C1 36 0 35 0 33.5z" fill="#f7aa3e"/><rect x="1.5" y="7" width="33" height="4" fill="#fffbe8"/><path d="M0 10.5H36V33.5c0 1.5-1 2.5-2.5 2.5H2.5C1 36 0 35 0 33.5z" fill="#f6c251"/></svg><span>com.jifen.ac</span></div><div class="trow" style="top:218.5px"><i></i><svg width="18" height="20" viewBox="0 0 36 36"><path d="M0 2.5C0 1 1 0 2.5 0H12.5c1.2 0 1.8.4 2.6 1.4L17.5 4.5H33.5C35 4.5 36 5.5 36 7V33.5c0 1.5-1 2.5-2.5 2.5H2.5C1 36 0 35 0 33.5z" fill="#f7aa3e"/><rect x="1.5" y="7" width="33" height="4" fill="#fffbe8"/><path d="M0 10.5H36V33.5c0 1.5-1 2.5-2.5 2.5H2.5C1 36 0 35 0 33.5z" fill="#f6c251"/></svg><span>com.kugou.androi...</span></div><div class="trow" style="top:242.5px"><i></i><svg width="18" height="20" viewBox="0 0 36 36"><path d="M0 2.5C0 1 1 0 2.5 0H12.5c1.2 0 1.8.4 2.6 1.4L17.5 4.5H33.5C35 4.5 36 5.5 36 7V33.5c0 1.5-1 2.5-2.5 2.5H2.5C1 36 0 35 0 33.5z" fill="#f7aa3e"/><rect x="1.5" y="7" width="33" height="4" fill="#fffbe8"/><path d="M0 10.5H36V33.5c0 1.5-1 2.5-2.5 2.5H2.5C1 36 0 35 0 33.5z" fill="#f6c251"/></svg><span>com.miui.voiceassi...</span></div><div class="trow" style="top:266.6px"><i></i><svg width="18" height="20" viewBox="0 0 36 36"><path d="M0 2.5C0 1 1 0 2.5 0H12.5c1.2 0 1.8.4 2.6 1.4L17.5 4.5H33.5C35 4.5 36 5.5 36 7V33.5c0 1.5-1 2.5-2.5 2.5H2.5C1 36 0 35 0 33.5z" fill="#f7aa3e"/><rect x="1.5" y="7" width="33" height="4" fill="#fffbe8"/><path d="M0 10.5H36V33.5c0 1.5-1 2.5-2.5 2.5H2.5C1 36 0 35 0 33.5z" fill="#f6c251"/></svg><span>com.netease.cloud...</span></div><div class="trow" style="top:290.6px"><svg width="18" height="20" viewBox="0 0 36 36"><path d="M0 2.5C0 1 1 0 2.5 0H12.5c1.2 0 1.8.4 2.6 1.4L17.5 4.5H33.5C35 4.5 36 5.5 36 7V33.5c0 1.5-1 2.5-2.5 2.5H2.5C1 36 0 35 0 33.5z" fill="#f7aa3e"/><rect x="1.5" y="7" width="33" height="4" fill="#fffbe8"/><path d="M0 10.5H36V33.5c0 1.5-1 2.5-2.5 2.5H2.5C1 36 0 35 0 33.5z" fill="#f6c251"/></svg><span>com.netease.gl</span></div><div class="trow" style="top:314.7px"><i></i><svg width="18" height="20" viewBox="0 0 36 36"><path d="M0 2.5C0 1 1 0 2.5 0H12.5c1.2 0 1.8.4 2.6 1.4L17.5 4.5H33.5C35 4.5 36 5.5 36 7V33.5c0 1.5-1 2.5-2.5 2.5H2.5C1 36 0 35 0 33.5z" fill="#f7aa3e"/><rect x="1.5" y="7" width="33" height="4" fill="#fffbe8"/><path d="M0 10.5H36V33.5c0 1.5-1 2.5-2.5 2.5H2.5C1 36 0 35 0 33.5z" fill="#f6c251"/></svg><span>com.qq.qcloud_Kc...</span></div><div class="trow" style="top:338.7px"><i></i><svg width="18" height="20" viewBox="0 0 36 36"><path d="M0 2.5C0 1 1 0 2.5 0H12.5c1.2 0 1.8.4 2.6 1.4L17.5 4.5H33.5C35 4.5 36 5.5 36 7V33.5c0 1.5-1 2.5-2.5 2.5H2.5C1 36 0 35 0 33.5z" fill="#f7aa3e"/><rect x="1.5" y="7" width="33" height="4" fill="#fffbe8"/><path d="M0 10.5H36V33.5c0 1.5-1 2.5-2.5 2.5H2.5C1 36 0 35 0 33.5z" fill="#f6c251"/></svg><span>com.quark.browser</span></div><div class="trow" style="top:362.8px"><i></i><svg width="18" height="20" viewBox="0 0 36 36"><path d="M0 2.5C0 1 1 0 2.5 0H12.5c1.2 0 1.8.4 2.6 1.4L17.5 4.5H33.5C35 4.5 36 5.5 36 7V33.5c0 1.5-1 2.5-2.5 2.5H2.5C1 36 0 35 0 33.5z" fill="#f7aa3e"/><rect x="1.5" y="7" width="33" height="4" fill="#fffbe8"/><path d="M0 10.5H36V33.5c0 1.5-1 2.5-2.5 2.5H2.5C1 36 0 35 0 33.5z" fill="#f6c251"/></svg><span>com.ruguoapp.jike...</span></div><div class="trow" style="top:386.8px"><i></i><svg width="18" height="20" viewBox="0 0 36 36"><path d="M0 2.5C0 1 1 0 2.5 0H12.5c1.2 0 1.8.4 2.6 1.4L17.5 4.5H33.5C35 4.5 36 5.5 36 7V33.5c0 1.5-1 2.5-2.5 2.5H2.5C1 36 0 35 0 33.5z" fill="#f7aa3e"/><rect x="1.5" y="7" width="33" height="4" fill="#fffbe8"/><path d="M0 10.5H36V33.5c0 1.5-1 2.5-2.5 2.5H2.5C1 36 0 35 0 33.5z" fill="#f6c251"/></svg><span>com.tencent.andr...</span></div><div class="trow" style="top:410.9px"><i></i><svg width="18" height="20" viewBox="0 0 36 36"><path d="M0 2.5C0 1 1 0 2.5 0H12.5c1.2 0 1.8.4 2.6 1.4L17.5 4.5H33.5C35 4.5 36 5.5 36 7V33.5c0 1.5-1 2.5-2.5 2.5H2.5C1 36 0 35 0 33.5z" fill="#f7aa3e"/><rect x="1.5" y="7" width="33" height="4" fill="#fffbe8"/><path d="M0 10.5H36V33.5c0 1.5-1 2.5-2.5 2.5H2.5C1 36 0 35 0 33.5z" fill="#f6c251"/></svg><span>com.tencent.edua...</span></div><div class="trow" style="top:434.9px"><i></i><svg width="18" height="20" viewBox="0 0 36 36"><path d="M0 2.5C0 1 1 0 2.5 0H12.5c1.2 0 1.8.4 2.6 1.4L17.5 4.5H33.5C35 4.5 36 5.5 36 7V33.5c0 1.5-1 2.5-2.5 2.5H2.5C1 36 0 35 0 33.5z" fill="#f7aa3e"/><rect x="1.5" y="7" width="33" height="4" fill="#fffbe8"/><path d="M0 10.5H36V33.5c0 1.5-1 2.5-2.5 2.5H2.5C1 36 0 35 0 33.5z" fill="#f6c251"/></svg><span>com.tencent.karao...</span></div><div class="trow" style="top:458.9px"><i></i><svg width="18" height="20" viewBox="0 0 36 36"><path d="M0 2.5C0 1 1 0 2.5 0H12.5c1.2 0 1.8.4 2.6 1.4L17.5 4.5H33.5C35 4.5 36 5.5 36 7V33.5c0 1.5-1 2.5-2.5 2.5H2.5C1 36 0 35 0 33.5z" fill="#f7aa3e"/><rect x="1.5" y="7" width="33" height="4" fill="#fffbe8"/><path d="M0 10.5H36V33.5c0 1.5-1 2.5-2.5 2.5H2.5C1 36 0 35 0 33.5z" fill="#f6c251"/></svg><span>com.tencent.mobil...</span></div><div class="trow" style="top:483px"><i></i><svg width="18" height="20" viewBox="0 0 36 36"><path d="M0 2.5C0 1 1 0 2.5 0H12.5c1.2 0 1.8.4 2.6 1.4L17.5 4.5H33.5C35 4.5 36 5.5 36 7V33.5c0 1.5-1 2.5-2.5 2.5H2.5C1 36 0 35 0 33.5z" fill="#f7aa3e"/><rect x="1.5" y="7" width="33" height="4" fill="#fffbe8"/><path d="M0 10.5H36V33.5c0 1.5-1 2.5-2.5 2.5H2.5C1 36 0 35 0 33.5z" fill="#f6c251"/></svg><span>com.tencent.mtt_K...</span></div><div class="abs" style="left:176px;top:90px;width:5px;height:50px;border-radius:3px;background:#bdbdbd"></div></div><div class="grid"><div class="cell" style="left:51px;top:-43px"><svg width="36" height="36" viewBox="0 0 36 36"><path d="M0 2.5C0 1 1 0 2.5 0H12.5c1.2 0 1.8.4 2.6 1.4L17.5 4.5H33.5C35 4.5 36 5.5 36 7V33.5c0 1.5-1 2.5-2.5 2.5H2.5C1 36 0 35 0 33.5z" fill="#f7aa3e"/><rect x="1.5" y="7" width="33" height="4" fill="#fffbe8"/><path d="M0 10.5H36V33.5c0 1.5-1 2.5-2.5 2.5H2.5C1 36 0 35 0 33.5z" fill="#f6c251"/></svg><span>backups</span></div><div class="cell sel" style="left:137px;top:-43px"><svg width="36" height="36" viewBox="0 0 36 36"><path d="M0 2.5C0 1 1 0 2.5 0H12.5c1.2 0 1.8.4 2.6 1.4L17.5 4.5H33.5C35 4.5 36 5.5 36 7V33.5c0 1.5-1 2.5-2.5 2.5H2.5C1 36 0 35 0 33.5z" fill="#f7aa3e"/><rect x="1.5" y="7" width="33" height="4" fill="#fffbe8"/><path d="M0 10.5H36V33.5c0 1.5-1 2.5-2.5 2.5H2.5C1 36 0 35 0 33.5z" fill="#f6c251"/></svg><span>baidu</span></div><div class="cell" style="left:223px;top:-43px"><svg width="36" height="36" viewBox="0 0 36 36"><path d="M0 2.5C0 1 1 0 2.5 0H12.5c1.2 0 1.8.4 2.6 1.4L17.5 4.5H33.5C35 4.5 36 5.5 36 7V33.5c0 1.5-1 2.5-2.5 2.5H2.5C1 36 0 35 0 33.5z" fill="#f7aa3e"/><rect x="1.5" y="7" width="33" height="4" fill="#fffbe8"/><path d="M0 10.5H36V33.5c0 1.5-1 2.5-2.5 2.5H2.5C1 36 0 35 0 33.5z" fill="#f6c251"/></svg><span>BaiduNetdi...</span></div><div class="cell" style="left:309px;top:-43px"><svg width="36" height="36" viewBox="0 0 36 36"><path d="M0 2.5C0 1 1 0 2.5 0H12.5c1.2 0 1.8.4 2.6 1.4L17.5 4.5H33.5C35 4.5 36 5.5 36 7V33.5c0 1.5-1 2.5-2.5 2.5H2.5C1 36 0 35 0 33.5z" fill="#f7aa3e"/><rect x="1.5" y="7" width="33" height="4" fill="#fffbe8"/><path d="M0 10.5H36V33.5c0 1.5-1 2.5-2.5 2.5H2.5C1 36 0 35 0 33.5z" fill="#f6c251"/></svg><span>bdb53ca9-...</span></div><div class="cell" style="left:395px;top:-43px"><svg width="36" height="36" viewBox="0 0 36 36"><path d="M0 2.5C0 1 1 0 2.5 0H12.5c1.2 0 1.8.4 2.6 1.4L17.5 4.5H33.5C35 4.5 36 5.5 36 7V33.5c0 1.5-1 2.5-2.5 2.5H2.5C1 36 0 35 0 33.5z" fill="#f7aa3e"/><rect x="1.5" y="7" width="33" height="4" fill="#fffbe8"/><path d="M0 10.5H36V33.5c0 1.5-1 2.5-2.5 2.5H2.5C1 36 0 35 0 33.5z" fill="#f6c251"/></svg><span>browser</span></div><div class="cell" style="left:481px;top:-43px"><svg width="36" height="36" viewBox="0 0 36 36"><path d="M0 2.5C0 1 1 0 2.5 0H12.5c1.2 0 1.8.4 2.6 1.4L17.5 4.5H33.5C35 4.5 36 5.5 36 7V33.5c0 1.5-1 2.5-2.5 2.5H2.5C1 36 0 35 0 33.5z" fill="#f7aa3e"/><rect x="1.5" y="7" width="33" height="4" fill="#fffbe8"/><path d="M0 10.5H36V33.5c0 1.5-1 2.5-2.5 2.5H2.5C1 36 0 35 0 33.5z" fill="#f6c251"/></svg><span>Btsdkgame</span></div><div class="cell" style="left:567px;top:-43px"><svg width="36" height="36" viewBox="0 0 36 36"><path d="M0 2.5C0 1 1 0 2.5 0H12.5c1.2 0 1.8.4 2.6 1.4L17.5 4.5H33.5C35 4.5 36 5.5 36 7V33.5c0 1.5-1 2.5-2.5 2.5H2.5C1 36 0 35 0 33.5z" fill="#f7aa3e"/><rect x="1.5" y="7" width="33" height="4" fill="#fffbe8"/><path d="M0 10.5H36V33.5c0 1.5-1 2.5-2.5 2.5H2.5C1 36 0 35 0 33.5z" fill="#f6c251"/></svg><span>bytedance</span></div><div class="cell" style="left:653px;top:-43px"><svg width="36" height="36" viewBox="0 0 36 36"><path d="M0 2.5C0 1 1 0 2.5 0H12.5c1.2 0 1.8.4 2.6 1.4L17.5 4.5H33.5C35 4.5 36 5.5 36 7V33.5c0 1.5-1 2.5-2.5 2.5H2.5C1 36 0 35 0 33.5z" fill="#f7aa3e"/><rect x="1.5" y="7" width="33" height="4" fill="#fffbe8"/><path d="M0 10.5H36V33.5c0 1.5-1 2.5-2.5 2.5H2.5C1 36 0 35 0 33.5z" fill="#f6c251"/></svg><span>ByteDownl...</span></div><div class="cell" style="left:51px;top:51.2px"><svg width="36" height="36" viewBox="0 0 36 36"><path d="M0 2.5C0 1 1 0 2.5 0H12.5c1.2 0 1.8.4 2.6 1.4L17.5 4.5H33.5C35 4.5 36 5.5 36 7V33.5c0 1.5-1 2.5-2.5 2.5H2.5C1 36 0 35 0 33.5z" fill="#f7aa3e"/><rect x="1.5" y="7" width="33" height="4" fill="#fffbe8"/><path d="M0 10.5H36V33.5c0 1.5-1 2.5-2.5 2.5H2.5C1 36 0 35 0 33.5z" fill="#f6c251"/></svg><span>cache</span></div><div class="cell" style="left:137px;top:51.2px"><svg width="36" height="36" viewBox="0 0 36 36"><path d="M0 2.5C0 1 1 0 2.5 0H12.5c1.2 0 1.8.4 2.6 1.4L17.5 4.5H33.5C35 4.5 36 5.5 36 7V33.5c0 1.5-1 2.5-2.5 2.5H2.5C1 36 0 35 0 33.5z" fill="#f7aa3e"/><rect x="1.5" y="7" width="33" height="4" fill="#fffbe8"/><path d="M0 10.5H36V33.5c0 1.5-1 2.5-2.5 2.5H2.5C1 36 0 35 0 33.5z" fill="#f6c251"/></svg><span>CCDownload</span></div><div class="cell" style="left:223px;top:51.2px"><svg width="36" height="36" viewBox="0 0 36 36"><path d="M0 2.5C0 1 1 0 2.5 0H12.5c1.2 0 1.8.4 2.6 1.4L17.5 4.5H33.5C35 4.5 36 5.5 36 7V33.5c0 1.5-1 2.5-2.5 2.5H2.5C1 36 0 35 0 33.5z" fill="#f7aa3e"/><path d="M0 9H36V33.5c0 1.5-1 2.5-2.5 2.5H2.5C1 36 0 35 0 33.5z" fill="#f6c251"/></svg><span>ccvoice</span></div><div class="cell" style="left:309px;top:51.2px"><svg width="36" height="36" viewBox="0 0 36 36"><path d="M0 2.5C0 1 1 0 2.5 0H12.5c1.2 0 1.8.4 2.6 1.4L17.5 4.5H33.5C35 4.5 36 5.5 36 7V33.5c0 1.5-1 2.5-2.5 2.5H2.5C1 36 0 35 0 33.5z" fill="#f7aa3e"/><rect x="1.5" y="7" width="33" height="4" fill="#fffbe8"/><path d="M0 10.5H36V33.5c0 1.5-1 2.5-2.5 2.5H2.5C1 36 0 35 0 33.5z" fill="#f6c251"/></svg><span>cn.xiaochu...</span></div><div class="cell" style="left:395px;top:51.2px"><svg width="36" height="36" viewBox="0 0 36 36"><path d="M0 2.5C0 1 1 0 2.5 0H12.5c1.2 0 1.8.4 2.6 1.4L17.5 4.5H33.5C35 4.5 36 5.5 36 7V33.5c0 1.5-1 2.5-2.5 2.5H2.5C1 36 0 35 0 33.5z" fill="#f7aa3e"/><rect x="1.5" y="7" width="33" height="4" fill="#fffbe8"/><path d="M0 10.5H36V33.5c0 1.5-1 2.5-2.5 2.5H2.5C1 36 0 35 0 33.5z" fill="#f6c251"/></svg><span>cn.xiaochu...</span></div><div class="cell" style="left:481px;top:51.2px"><svg width="36" height="36" viewBox="0 0 36 36"><path d="M0 2.5C0 1 1 0 2.5 0H12.5c1.2 0 1.8.4 2.6 1.4L17.5 4.5H33.5C35 4.5 36 5.5 36 7V33.5c0 1.5-1 2.5-2.5 2.5H2.5C1 36 0 35 0 33.5z" fill="#f7aa3e"/><rect x="1.5" y="7" width="33" height="4" fill="#fffbe8"/><path d="M0 10.5H36V33.5c0 1.5-1 2.5-2.5 2.5H2.5C1 36 0 35 0 33.5z" fill="#f6c251"/></svg><span>com.hicore...</span></div><div class="cell" style="left:567px;top:51.2px"><svg width="36" height="36" viewBox="0 0 36 36"><path d="M0 2.5C0 1 1 0 2.5 0H12.5c1.2 0 1.8.4 2.6 1.4L17.5 4.5H33.5C35 4.5 36 5.5 36 7V33.5c0 1.5-1 2.5-2.5 2.5H2.5C1 36 0 35 0 33.5z" fill="#f7aa3e"/><path d="M0 9H36V33.5c0 1.5-1 2.5-2.5 2.5H2.5C1 36 0 35 0 33.5z" fill="#f6c251"/></svg><span>com.jifen.ac</span></div><div class="cell" style="left:653px;top:51.2px"><svg width="36" height="36" viewBox="0 0 36 36"><path d="M0 2.5C0 1 1 0 2.5 0H12.5c1.2 0 1.8.4 2.6 1.4L17.5 4.5H33.5C35 4.5 36 5.5 36 7V33.5c0 1.5-1 2.5-2.5 2.5H2.5C1 36 0 35 0 33.5z" fill="#f7aa3e"/><rect x="1.5" y="7" width="33" height="4" fill="#fffbe8"/><path d="M0 10.5H36V33.5c0 1.5-1 2.5-2.5 2.5H2.5C1 36 0 35 0 33.5z" fill="#f6c251"/></svg><span>com.kugou...</span></div><div class="cell" style="left:51px;top:145.4px"><svg width="36" height="36" viewBox="0 0 36 36"><path d="M0 2.5C0 1 1 0 2.5 0H12.5c1.2 0 1.8.4 2.6 1.4L17.5 4.5H33.5C35 4.5 36 5.5 36 7V33.5c0 1.5-1 2.5-2.5 2.5H2.5C1 36 0 35 0 33.5z" fill="#f7aa3e"/><rect x="1.5" y="7" width="33" height="4" fill="#fffbe8"/><path d="M0 10.5H36V33.5c0 1.5-1 2.5-2.5 2.5H2.5C1 36 0 35 0 33.5z" fill="#f6c251"/></svg><span>com.miui.v...</span></div><div class="cell" style="left:137px;top:145.4px"><svg width="36" height="36" viewBox="0 0 36 36"><path d="M0 2.5C0 1 1 0 2.5 0H12.5c1.2 0 1.8.4 2.6 1.4L17.5 4.5H33.5C35 4.5 36 5.5 36 7V33.5c0 1.5-1 2.5-2.5 2.5H2.5C1 36 0 35 0 33.5z" fill="#f7aa3e"/><rect x="1.5" y="7" width="33" height="4" fill="#fffbe8"/><path d="M0 10.5H36V33.5c0 1.5-1 2.5-2.5 2.5H2.5C1 36 0 35 0 33.5z" fill="#f6c251"/></svg><span>com.ruguo...</span></div><div class="cell" style="left:223px;top:145.4px"><svg width="36" height="36" viewBox="0 0 36 36"><path d="M0 2.5C0 1 1 0 2.5 0H12.5c1.2 0 1.8.4 2.6 1.4L17.5 4.5H33.5C35 4.5 36 5.5 36 7V33.5c0 1.5-1 2.5-2.5 2.5H2.5C1 36 0 35 0 33.5z" fill="#f7aa3e"/><path d="M0 9H36V33.5c0 1.5-1 2.5-2.5 2.5H2.5C1 36 0 35 0 33.5z" fill="#f6c251"/></svg><span>com.tence...</span></div><div class="cell" style="left:309px;top:145.4px"><svg width="36" height="36" viewBox="0 0 36 36"><path d="M0 2.5C0 1 1 0 2.5 0H12.5c1.2 0 1.8.4 2.6 1.4L17.5 4.5H33.5C35 4.5 36 5.5 36 7V33.5c0 1.5-1 2.5-2.5 2.5H2.5C1 36 0 35 0 33.5z" fill="#f7aa3e"/><rect x="1.5" y="7" width="33" height="4" fill="#fffbe8"/><path d="M0 10.5H36V33.5c0 1.5-1 2.5-2.5 2.5H2.5C1 36 0 35 0 33.5z" fill="#f6c251"/></svg><span>com.teni.v...</span></div><div class="cell" style="left:395px;top:145.4px"><svg width="36" height="36" viewBox="0 0 36 36"><path d="M0 2.5C0 1 1 0 2.5 0H12.5c1.2 0 1.8.4 2.6 1.4L17.5 4.5H33.5C35 4.5 36 5.5 36 7V33.5c0 1.5-1 2.5-2.5 2.5H2.5C1 36 0 35 0 33.5z" fill="#f7aa3e"/><rect x="1.5" y="7" width="33" height="4" fill="#fffbe8"/><path d="M0 10.5H36V33.5c0 1.5-1 2.5-2.5 2.5H2.5C1 36 0 35 0 33.5z" fill="#f6c251"/></svg><span>con.miui.v...</span></div><div class="cell" style="left:481px;top:145.4px"><svg width="36" height="36" viewBox="0 0 36 36"><path d="M0 2.5C0 1 1 0 2.5 0H12.5c1.2 0 1.8.4 2.6 1.4L17.5 4.5H33.5C35 4.5 36 5.5 36 7V33.5c0 1.5-1 2.5-2.5 2.5H2.5C1 36 0 35 0 33.5z" fill="#f7aa3e"/><rect x="1.5" y="7" width="33" height="4" fill="#fffbe8"/><path d="M0 10.5H36V33.5c0 1.5-1 2.5-2.5 2.5H2.5C1 36 0 35 0 33.5z" fill="#f6c251"/></svg><span>com.ruguo...</span></div><div class="cell" style="left:567px;top:145.4px"><svg width="36" height="36" viewBox="0 0 36 36"><path d="M0 2.5C0 1 1 0 2.5 0H12.5c1.2 0 1.8.4 2.6 1.4L17.5 4.5H33.5C35 4.5 36 5.5 36 7V33.5c0 1.5-1 2.5-2.5 2.5H2.5C1 36 0 35 0 33.5z" fill="#f7aa3e"/><rect x="1.5" y="7" width="33" height="4" fill="#fffbe8"/><path d="M0 10.5H36V33.5c0 1.5-1 2.5-2.5 2.5H2.5C1 36 0 35 0 33.5z" fill="#f6c251"/></svg><span>com.tence...</span></div><div class="cell" style="left:653px;top:145.4px"><svg width="36" height="36" viewBox="0 0 36 36"><path d="M0 2.5C0 1 1 0 2.5 0H12.5c1.2 0 1.8.4 2.6 1.4L17.5 4.5H33.5C35 4.5 36 5.5 36 7V33.5c0 1.5-1 2.5-2.5 2.5H2.5C1 36 0 35 0 33.5z" fill="#f7aa3e"/><rect x="1.5" y="7" width="33" height="4" fill="#fffbe8"/><path d="M0 10.5H36V33.5c0 1.5-1 2.5-2.5 2.5H2.5C1 36 0 35 0 33.5z" fill="#f6c251"/></svg><span>com.tence...</span></div><div class="cell" style="left:51px;top:239.6px"><svg width="36" height="36" viewBox="0 0 36 36"><path d="M0 2.5C0 1 1 0 2.5 0H12.5c1.2 0 1.8.4 2.6 1.4L17.5 4.5H33.5C35 4.5 36 5.5 36 7V33.5c0 1.5-1 2.5-2.5 2.5H2.5C1 36 0 35 0 33.5z" fill="#f7aa3e"/><rect x="1.5" y="7" width="33" height="4" fill="#fffbe8"/><path d="M0 10.5H36V33.5c0 1.5-1 2.5-2.5 2.5H2.5C1 36 0 35 0 33.5z" fill="#f6c251"/></svg><span>com.tence...</span></div><div class="cell" style="left:137px;top:239.6px"><svg width="36" height="36" viewBox="0 0 36 36"><path d="M0 2.5C0 1 1 0 2.5 0H12.5c1.2 0 1.8.4 2.6 1.4L17.5 4.5H33.5C35 4.5 36 5.5 36 7V33.5c0 1.5-1 2.5-2.5 2.5H2.5C1 36 0 35 0 33.5z" fill="#f7aa3e"/><rect x="1.5" y="7" width="33" height="4" fill="#fffbe8"/><path d="M0 10.5H36V33.5c0 1.5-1 2.5-2.5 2.5H2.5C1 36 0 35 0 33.5z" fill="#f6c251"/></svg><span>com.tence...</span></div><div class="cell" style="left:223px;top:239.6px"><svg width="36" height="36" viewBox="0 0 36 36"><path d="M0 2.5C0 1 1 0 2.5 0H12.5c1.2 0 1.8.4 2.6 1.4L17.5 4.5H33.5C35 4.5 36 5.5 36 7V33.5c0 1.5-1 2.5-2.5 2.5H2.5C1 36 0 35 0 33.5z" fill="#f7aa3e"/><rect x="1.5" y="7" width="33" height="4" fill="#fffbe8"/><path d="M0 10.5H36V33.5c0 1.5-1 2.5-2.5 2.5H2.5C1 36 0 35 0 33.5z" fill="#f6c251"/></svg><span>com.tence...</span></div><div class="cell" style="left:309px;top:239.6px"><svg width="36" height="36" viewBox="0 0 36 36"><path d="M0 2.5C0 1 1 0 2.5 0H12.5c1.2 0 1.8.4 2.6 1.4L17.5 4.5H33.5C35 4.5 36 5.5 36 7V33.5c0 1.5-1 2.5-2.5 2.5H2.5C1 36 0 35 0 33.5z" fill="#f7aa3e"/><rect x="1.5" y="7" width="33" height="4" fill="#fffbe8"/><path d="M0 10.5H36V33.5c0 1.5-1 2.5-2.5 2.5H2.5C1 36 0 35 0 33.5z" fill="#f6c251"/></svg><span>com.tence...</span></div><div class="cell" style="left:395px;top:239.6px"><svg width="36" height="36" viewBox="0 0 36 36"><path d="M0 2.5C0 1 1 0 2.5 0H12.5c1.2 0 1.8.4 2.6 1.4L17.5 4.5H33.5C35 4.5 36 5.5 36 7V33.5c0 1.5-1 2.5-2.5 2.5H2.5C1 36 0 35 0 33.5z" fill="#f7aa3e"/><rect x="1.5" y="7" width="33" height="4" fill="#fffbe8"/><path d="M0 10.5H36V33.5c0 1.5-1 2.5-2.5 2.5H2.5C1 36 0 35 0 33.5z" fill="#f6c251"/></svg><span>com.tence...</span></div><div class="cell" style="left:481px;top:239.6px"><svg width="36" height="36" viewBox="0 0 36 36"><path d="M0 2.5C0 1 1 0 2.5 0H12.5c1.2 0 1.8.4 2.6 1.4L17.5 4.5H33.5C35 4.5 36 5.5 36 7V33.5c0 1.5-1 2.5-2.5 2.5H2.5C1 36 0 35 0 33.5z" fill="#f7aa3e"/><path d="M0 9H36V33.5c0 1.5-1 2.5-2.5 2.5H2.5C1 36 0 35 0 33.5z" fill="#f6c251"/></svg><span>com.tence...</span></div><div class="cell" style="left:567px;top:239.6px"><svg width="36" height="36" viewBox="0 0 36 36"><path d="M0 2.5C0 1 1 0 2.5 0H12.5c1.2 0 1.8.4 2.6 1.4L17.5 4.5H33.5C35 4.5 36 5.5 36 7V33.5c0 1.5-1 2.5-2.5 2.5H2.5C1 36 0 35 0 33.5z" fill="#f7aa3e"/><rect x="1.5" y="7" width="33" height="4" fill="#fffbe8"/><path d="M0 10.5H36V33.5c0 1.5-1 2.5-2.5 2.5H2.5C1 36 0 35 0 33.5z" fill="#f6c251"/></svg><span>com.vmos....</span></div><div class="cell" style="left:653px;top:239.6px"><svg width="36" height="36" viewBox="0 0 36 36"><path d="M0 2.5C0 1 1 0 2.5 0H12.5c1.2 0 1.8.4 2.6 1.4L17.5 4.5H33.5C35 4.5 36 5.5 36 7V33.5c0 1.5-1 2.5-2.5 2.5H2.5C1 36 0 35 0 33.5z" fill="#f7aa3e"/><rect x="1.5" y="7" width="33" height="4" fill="#fffbe8"/><path d="M0 10.5H36V33.5c0 1.5-1 2.5-2.5 2.5H2.5C1 36 0 35 0 33.5z" fill="#f6c251"/></svg><span>com.westb...</span></div><div class="cell" style="left:51px;top:333.8px"><svg width="36" height="36" viewBox="0 0 36 36"><path d="M0 2.5C0 1 1 0 2.5 0H12.5c1.2 0 1.8.4 2.6 1.4L17.5 4.5H33.5C35 4.5 36 5.5 36 7V33.5c0 1.5-1 2.5-2.5 2.5H2.5C1 36 0 35 0 33.5z" fill="#f7aa3e"/><path d="M0 9H36V33.5c0 1.5-1 2.5-2.5 2.5H2.5C1 36 0 35 0 33.5z" fill="#f6c251"/></svg><span>com.wifi.ac</span></div><div class="cell" style="left:137px;top:333.8px"><svg width="36" height="36" viewBox="0 0 36 36"><path d="M0 2.5C0 1 1 0 2.5 0H12.5c1.2 0 1.8.4 2.6 1.4L17.5 4.5H33.5C35 4.5 36 5.5 36 7V33.5c0 1.5-1 2.5-2.5 2.5H2.5C1 36 0 35 0 33.5z" fill="#f7aa3e"/><rect x="1.5" y="7" width="33" height="4" fill="#fffbe8"/><path d="M0 10.5H36V33.5c0 1.5-1 2.5-2.5 2.5H2.5C1 36 0 35 0 33.5z" fill="#f6c251"/></svg><span>com.ylmf.a...</span></div><div class="cell" style="left:223px;top:333.8px"><svg width="36" height="36" viewBox="0 0 36 36"><path d="M0 2.5C0 1 1 0 2.5 0H12.5c1.2 0 1.8.4 2.6 1.4L17.5 4.5H33.5C35 4.5 36 5.5 36 7V33.5c0 1.5-1 2.5-2.5 2.5H2.5C1 36 0 35 0 33.5z" fill="#f7aa3e"/><rect x="1.5" y="7" width="33" height="4" fill="#fffbe8"/><path d="M0 10.5H36V33.5c0 1.5-1 2.5-2.5 2.5H2.5C1 36 0 35 0 33.5z" fill="#f6c251"/></svg><span>com.zhaopi...</span></div><div class="cell" style="left:309px;top:333.8px"><svg width="36" height="36" viewBox="0 0 36 36"><path d="M0 2.5C0 1 1 0 2.5 0H12.5c1.2 0 1.8.4 2.6 1.4L17.5 4.5H33.5C35 4.5 36 5.5 36 7V33.5c0 1.5-1 2.5-2.5 2.5H2.5C1 36 0 35 0 33.5z" fill="#f7aa3e"/><rect x="1.5" y="7" width="33" height="4" fill="#fffbe8"/><path d="M0 10.5H36V33.5c0 1.5-1 2.5-2.5 2.5H2.5C1 36 0 35 0 33.5z" fill="#f6c251"/></svg><span>com.zhaopi...</span></div><div class="cell" style="left:395px;top:333.8px"><svg width="36" height="36" viewBox="0 0 36 36"><path d="M0 2.5C0 1 1 0 2.5 0H12.5c1.2 0 1.8.4 2.6 1.4L17.5 4.5H33.5C35 4.5 36 5.5 36 7V33.5c0 1.5-1 2.5-2.5 2.5H2.5C1 36 0 35 0 33.5z" fill="#f7aa3e"/><rect x="1.5" y="7" width="33" height="4" fill="#fffbe8"/><path d="M0 10.5H36V33.5c0 1.5-1 2.5-2.5 2.5H2.5C1 36 0 35 0 33.5z" fill="#f6c251"/></svg><span>data</span></div><div class="cell" style="left:481px;top:333.8px"><svg width="36" height="36" viewBox="0 0 36 36"><path d="M0 2.5C0 1 1 0 2.5 0H12.5c1.2 0 1.8.4 2.6 1.4L17.5 4.5H33.5C35 4.5 36 5.5 36 7V33.5c0 1.5-1 2.5-2.5 2.5H2.5C1 36 0 35 0 33.5z" fill="#f7aa3e"/><rect x="1.5" y="7" width="33" height="4" fill="#fffbe8"/><path d="M0 10.5H36V33.5c0 1.5-1 2.5-2.5 2.5H2.5C1 36 0 35 0 33.5z" fill="#f6c251"/></svg><span>DCIM</span></div><div class="cell" style="left:567px;top:333.8px"><svg width="36" height="36" viewBox="0 0 36 36"><path d="M0 2.5C0 1 1 0 2.5 0H12.5c1.2 0 1.8.4 2.6 1.4L17.5 4.5H33.5C35 4.5 36 5.5 36 7V33.5c0 1.5-1 2.5-2.5 2.5H2.5C1 36 0 35 0 33.5z" fill="#f7aa3e"/><rect x="1.5" y="7" width="33" height="4" fill="#fffbe8"/><path d="M0 10.5H36V33.5c0 1.5-1 2.5-2.5 2.5H2.5C1 36 0 35 0 33.5z" fill="#f6c251"/></svg><span>digu</span></div><div class="cell" style="left:653px;top:333.8px"><svg width="36" height="36" viewBox="0 0 36 36"><path d="M0 2.5C0 1 1 0 2.5 0H12.5c1.2 0 1.8.4 2.6 1.4L17.5 4.5H33.5C35 4.5 36 5.5 36 7V33.5c0 1.5-1 2.5-2.5 2.5H2.5C1 36 0 35 0 33.5z" fill="#f7aa3e"/><rect x="1.5" y="7" width="33" height="4" fill="#fffbe8"/><path d="M0 10.5H36V33.5c0 1.5-1 2.5-2.5 2.5H2.5C1 36 0 35 0 33.5z" fill="#f6c251"/></svg><span>Dimension...</span></div><div class="cell" style="left:51px;top:428px"><svg width="36" height="36" viewBox="0 0 36 36"><path d="M0 2.5C0 1 1 0 2.5 0H12.5c1.2 0 1.8.4 2.6 1.4L17.5 4.5H33.5C35 4.5 36 5.5 36 7V33.5c0 1.5-1 2.5-2.5 2.5H2.5C1 36 0 35 0 33.5z" fill="#f7aa3e"/><path d="M0 9H36V33.5c0 1.5-1 2.5-2.5 2.5H2.5C1 36 0 35 0 33.5z" fill="#f6c251"/></svg><span>Dividan</span></div><div class="cell" style="left:137px;top:428px"><svg width="36" height="36" viewBox="0 0 36 36"><path d="M0 2.5C0 1 1 0 2.5 0H12.5c1.2 0 1.8.4 2.6 1.4L17.5 4.5H33.5C35 4.5 36 5.5 36 7V33.5c0 1.5-1 2.5-2.5 2.5H2.5C1 36 0 35 0 33.5z" fill="#f7aa3e"/><rect x="1.5" y="7" width="33" height="4" fill="#fffbe8"/><path d="M0 10.5H36V33.5c0 1.5-1 2.5-2.5 2.5H2.5C1 36 0 35 0 33.5z" fill="#f6c251"/></svg><span>DJI</span></div><div class="cell" style="left:223px;top:428px"><svg width="36" height="36" viewBox="0 0 36 36"><path d="M0 2.5C0 1 1 0 2.5 0H12.5c1.2 0 1.8.4 2.6 1.4L17.5 4.5H33.5C35 4.5 36 5.5 36 7V33.5c0 1.5-1 2.5-2.5 2.5H2.5C1 36 0 35 0 33.5z" fill="#f7aa3e"/><path d="M0 9H36V33.5c0 1.5-1 2.5-2.5 2.5H2.5C1 36 0 35 0 33.5z" fill="#f6c251"/></svg><span>dnschache</span></div><div class="cell" style="left:309px;top:428px"><svg width="36" height="36" viewBox="0 0 36 36"><path d="M0 2.5C0 1 1 0 2.5 0H12.5c1.2 0 1.8.4 2.6 1.4L17.5 4.5H33.5C35 4.5 36 5.5 36 7V33.5c0 1.5-1 2.5-2.5 2.5H2.5C1 36 0 35 0 33.5z" fill="#f7aa3e"/><rect x="1.5" y="7" width="33" height="4" fill="#fffbe8"/><path d="M0 10.5H36V33.5c0 1.5-1 2.5-2.5 2.5H2.5C1 36 0 35 0 33.5z" fill="#f6c251"/></svg><span>Documents</span></div><div class="cell" style="left:395px;top:428px"><svg width="36" height="36" viewBox="0 0 36 36"><path d="M0 2.5C0 1 1 0 2.5 0H12.5c1.2 0 1.8.4 2.6 1.4L17.5 4.5H33.5C35 4.5 36 5.5 36 7V33.5c0 1.5-1 2.5-2.5 2.5H2.5C1 36 0 35 0 33.5z" fill="#f7aa3e"/><rect x="1.5" y="7" width="33" height="4" fill="#fffbe8"/><path d="M0 10.5H36V33.5c0 1.5-1 2.5-2.5 2.5H2.5C1 36 0 35 0 33.5z" fill="#f6c251"/></svg><span>Download</span></div><div class="cell" style="left:481px;top:428px"><svg width="36" height="36" viewBox="0 0 36 36"><path d="M0 2.5C0 1 1 0 2.5 0H12.5c1.2 0 1.8.4 2.6 1.4L17.5 4.5H33.5C35 4.5 36 5.5 36 7V33.5c0 1.5-1 2.5-2.5 2.5H2.5C1 36 0 35 0 33.5z" fill="#f7aa3e"/><rect x="1.5" y="7" width="33" height="4" fill="#fffbe8"/><path d="M0 10.5H36V33.5c0 1.5-1 2.5-2.5 2.5H2.5C1 36 0 35 0 33.5z" fill="#f6c251"/></svg><span>duilite</span></div><div class="cell" style="left:567px;top:428px"><svg width="36" height="36" viewBox="0 0 36 36"><path d="M0 2.5C0 1 1 0 2.5 0H12.5c1.2 0 1.8.4 2.6 1.4L17.5 4.5H33.5C35 4.5 36 5.5 36 7V33.5c0 1.5-1 2.5-2.5 2.5H2.5C1 36 0 35 0 33.5z" fill="#f7aa3e"/><rect x="1.5" y="7" width="33" height="4" fill="#fffbe8"/><path d="M0 10.5H36V33.5c0 1.5-1 2.5-2.5 2.5H2.5C1 36 0 35 0 33.5z" fill="#f6c251"/></svg><span>emlibs</span></div><div class="cell" style="left:653px;top:428px"><svg width="36" height="36" viewBox="0 0 36 36"><path d="M0 2.5C0 1 1 0 2.5 0H12.5c1.2 0 1.8.4 2.6 1.4L17.5 4.5H33.5C35 4.5 36 5.5 36 7V33.5c0 1.5-1 2.5-2.5 2.5H2.5C1 36 0 35 0 33.5z" fill="#f7aa3e"/><rect x="1.5" y="7" width="33" height="4" fill="#fffbe8"/><path d="M0 10.5H36V33.5c0 1.5-1 2.5-2.5 2.5H2.5C1 36 0 35 0 33.5z" fill="#f6c251"/></svg><span>Everphoto</span></div><div class="abs" style="left:781px;top:0;width:4px;height:499px;background:#f9f9fa"></div><div class="abs" style="left:778px;top:94px;width:5px;height:86px;border-radius:3px;background:#c1c1c1"></div></div><svg class="abs" style="left:380px;top:352px" width="250" height="14" viewBox="380 352 250 14"><path d="M383.5 359.8c6 1.2 14 .6 24.5-2.2" stroke="#5a5a60" stroke-width="1.3" fill="none"/><path d="M392 360.6l14-2.6" stroke="#9a9aa0" stroke-width="1.6" stroke-dasharray="1 1"/><g fill="#d6a043"><rect x="434.5" y="358.5" width="1.5" height="1.5"/><rect x="441" y="358.5" width="1.5" height="1.5"/><rect x="454" y="358.5" width="1.5" height="1.5"/><rect x="460.5" y="358.5" width="1.5" height="1.5"/><rect x="604.5" y="358.5" width="1.5" height="1.5"/><rect x="610.5" y="358.5" width="1.5" height="1.5"/><rect x="616.5" y="358.5" width="1.5" height="1.5"/></g><g fill="#c4c8d2"><rect x="473.5" y="358.5" width="1.5" height="1.5"/><rect x="480" y="358.5" width="1.5" height="1.5"/><rect x="490.5" y="358.5" width="1.5" height="1.5"/><rect x="501.5" y="359" width="8" height="1"/></g></svg><div class="sb"><span class="abs" style="left:23px;top:6px"><svg width="23" height="22" viewBox="0 0 36 36"><path d="M0 2.5C0 1 1 0 2.5 0H12.5c1.2 0 1.8.4 2.6 1.4L17.5 4.5H33.5C35 4.5 36 5.5 36 7V33.5c0 1.5-1 2.5-2.5 2.5H2.5C1 36 0 35 0 33.5z" fill="#f7aa3e"/><rect x="1.5" y="7" width="33" height="4" fill="#fffbe8"/><path d="M0 10.5H36V33.5c0 1.5-1 2.5-2.5 2.5H2.5C1 36 0 35 0 33.5z" fill="#f6c251"/></svg></span><span class="abs" style="left:89px;top:0;line-height:35px;font-size:12.5px;color:#555">224个条目</span><div class="btn" style="left:895px;top:6px;width:66px;height:24px;line-height:25px;background:#fff;color:#777;border-radius:2px">快捷键</div></div></div><div class="panel" style="top:35px;height:250px;background:rgba(28,30,56,.66);box-shadow:0 0 5px rgba(20,20,40,.45)"><svg class="abs" style="left:6px;top:6px" width="13" height="13" viewBox="0 0 13 13"><circle cx="6.5" cy="6.5" r="6.5" fill="#1c1d30"/><path d="M3.8 3.8l5.4 5.4M9.2 3.8l-5.4 5.4" stroke="#fff" stroke-width="1.5"/></svg></div><div class="abs" style="left:1606px;top:310px;width:108px;height:22px;border-radius:3px 3px 0 0;background:linear-gradient(90deg,#3cb9fc,#45a2f8);color:#fff;font-size:12px;line-height:24px;padding-left:14px;text-shadow:0 0 1px #fff">Toolbox</div><div class="panel" style="top:331px;height:73px;background:#36384f"><div class="abs" style="left:21px;top:6px;width:50px;height:58px;background:#2b2c42;border-radius:3px"></div><span class="abs" style="left:16px;width:60px;top:46px;text-align:center;font-size:12px;line-height:18px;font-weight:bold;color:#fff">概览</span><span class="abs" style="left:68px;width:60px;top:46px;text-align:center;font-size:12px;line-height:18px;font-weight:bold;color:#fff">文件</span><span class="abs" style="left:120px;width:60px;top:46px;text-align:center;font-size:12px;line-height:18px;font-weight:bold;color:#fff">网址</span><span class="abs" style="left:171px;width:60px;top:46px;text-align:center;font-size:12px;line-height:18px;font-weight:bold;color:#8e90a0">剪贴板</span><span class="abs" style="left:224px;width:60px;top:46px;text-align:center;font-size:12px;line-height:18px;font-weight:bold;color:#fff">应用</span><svg class="abs" style="left:36px;top:13px" width="20" height="28" viewBox="0 0 20 28"><rect x="0" y="0" width="19" height="27" rx="2" fill="#fff"/><rect x="2.5" y="3.5" width="14" height="18" fill="#2b2c42"/><rect x="7.5" y="23.5" width="4" height="1.5" fill="#2b2c42"/></svg><div class="abs" style="left:87px;top:33px;width:21px;height:7px;background:#fff;border-radius:0 0 2px 2px"></div><div class="abs" style="left:139px;top:33px;width:18px;height:5px;background:#fff;border-radius:0 0 9px 9px"></div><div class="abs" style="left:191px;top:33px;width:22px;height:7px;border:2px solid #8e90a0;border-top:0;border-radius:0 0 3px 3px"></div><div class="abs" style="left:244px;top:33px;width:22px;height:7px;background:#fff;border-radius:0 0 3px 3px"></div></div><div class="abs" style="left:1626px;top:410px;width:0;height:0;border-left:8px solid transparent;border-right:8px solid transparent;border-bottom:9px solid #373951"></div><div class="panel" style="top:418px;height:131px;background:#373951"><span class="abs" style="left:19px;top:13px;font-size:20px;line-height:25px;color:#fff;letter-spacing:-.15px">Xiaomi Redmi ...</span><svg class="abs" style="left:223px;top:15px" width="18" height="18" viewBox="0 0 18 18"><path d="M14.5 9.5a5.8 5.8 0 1 1-3.5-5.4" fill="none" stroke="#fff" stroke-width="1.9"/><path d="M9 0.3l4.8 3.4-5 2.9z" fill="#fff"/></svg><svg class="abs" style="left:263px;top:16px" width="17" height="17" viewBox="0 0 17 17"><circle cx="8.5" cy="8.5" r="7" fill="none" stroke="#fff" stroke-width="1.8"/><rect x="7.6" y="7.3" width="1.8" height="5" fill="#fff"/><rect x="7.6" y="4.3" width="1.8" height="1.8" fill="#fff"/></svg><svg class="abs" style="left:21px;top:63px" width="11" height="15" viewBox="0 0 11 15"><rect x=".7" y=".7" width="9.6" height="13.6" rx="1" fill="none" stroke="#fff" stroke-width="1.4"/><rect x=".7" y="11" width="9.6" height="3" fill="#fff"/></svg><span class="abs" style="left:39px;top:63px;font-size:11.5px;line-height:18px;color:#fff;font-weight:bold;white-space:nowrap;letter-spacing:-.04px">451.96 GB / 460.31 GB</span><div class="abs" style="left:20px;top:80px;width:260px;height:5px;background:#24253a;border-radius:2px"><div style="width:202px;height:5px;background:#5dd18b;border-radius:2px"></div></div></div><div class="abs" style="left:1664px;top:334px;width:256px;height:31px;background:#fff;border-radius:3px 0 0 3px;box-shadow:0 0 3px rgba(0,0,0,.3)"><span class="abs" style="left:20px;top:6px;font-size:18px;line-height:22px;font-weight:bold;color:#1267d3">中</span><svg class="abs" style="left:52px;top:8px" width="18" height="16" viewBox="0 0 18 16"><circle cx="3.5" cy="4.5" r="2" fill="none" stroke="#1267d3" stroke-width="1.6"/><path d="M10.5 6.5h3.2v3.2c0 2-1 3.3-3 3.8v-1.4c.8-.4 1.2-1 1.3-2.4h-1.5z" fill="#1267d3"/></svg><svg class="abs" style="left:82px;top:7px" width="18" height="18" viewBox="0 0 22 22"><circle cx="11" cy="11" r="10.5" fill="#1267d3"/><circle cx="7" cy="8" r="1.7" fill="#fff"/><circle cx="15" cy="8" r="1.7" fill="#fff"/><path d="M4.5 12h13c-.5 3.5-3 6-6.5 6s-6-2.5-6.5-6z" fill="#fff"/></svg><svg class="abs" style="left:113px;top:6px" width="15" height="20" viewBox="0 0 18 24"><rect x="5.5" y="0" width="7" height="14" rx="3.5" fill="#1267d3"/><path d="M2 9.5v1.5a7 7 0 0 0 14 0V9.5" fill="none" stroke="#1267d3" stroke-width="2.2"/><path d="M9 18v4M5.5 22.5h7" stroke="#1267d3" stroke-width="2.2"/></svg><svg class="abs" style="left:142px;top:9px" width="18" height="15" viewBox="0 0 22 18"><rect x="0" y="0" width="22" height="18" rx="2.5" fill="#1267d3"/><g fill="#fff"><rect x="3" y="3.5" width="3" height="3"/><rect x="7.5" y="3.5" width="3" height="3"/><rect x="12" y="3.5" width="3" height="3"/><rect x="16.5" y="3.5" width="3" height="3"/><rect x="3" y="8" width="3" height="3"/><rect x="7.5" y="8" width="3" height="3"/><rect x="12" y="8" width="3" height="3"/><rect x="16.5" y="8" width="3" height="3"/><rect x="5" y="12.5" width="12" height="2.5"/></g></svg><svg class="abs" style="left:173px;top:6px" width="20" height="19" viewBox="0 0 24 22"><circle cx="9" cy="6" r="5" fill="#cfcfcf"/><path d="M0 21c0-6 4-9 9-9s9 3 9 9z" fill="#cfcfcf"/><rect x="12" y="11" width="11" height="9" fill="#e9e9e9" stroke="#d5d5d5"/><path d="M14 14h7M14 17h7" stroke="#c6c6c6"/></svg><svg class="abs" style="left:202px;top:7px" width="19" height="17" viewBox="0 0 20 17"><path d="M6.5 1L0 4.5l2.5 4.5 2.5-1.2V16h10V7.8l2.5 1.2L20 4.5 13.5 1c-.8 1.6-2 2.3-3.5 2.3S7.3 2.6 6.5 1z" fill="#1267d3"/></svg><svg class="abs" style="left:233px;top:8px" width="16" height="16" viewBox="0 0 18 18"><g fill="#1267d3"><rect x="0" y="0" width="8" height="8" rx="2.5"/><circle cx="13.5" cy="4" r="4"/><rect x="0" y="10" width="8" height="8" rx="2.5"/><rect x="10" y="10" width="8" height="8" rx="2.5"/></g></svg></div><div class="abs" style="left:1641.5px;top:331px;width:34px;height:31px;background:linear-gradient(160deg,#f4702c,#ea4420);border-radius:2px;transform:rotate(-12.5deg) skewX(-2deg);text-align:center;overflow:hidden"><span style="display:block;font-size:36px;line-height:30px;font-weight:bold;font-style:italic;color:#fff;font-family:'Liberation Sans',sans-serif;transform:scale(1.22,.86)">S</span></div><div class="abs" style="left:0;top:905px;width:1920px;height:36px;background:linear-gradient(rgba(18,19,36,0),rgba(18,19,36,.75) 35%,rgba(16,17,32,.9))"></div><div class="abs" style="left:3px;top:907px;width:152px;height:34px;background:radial-gradient(ellipse 70% 110% at 58% 105%,rgba(255,255,255,.62),rgba(255,255,255,.3) 45%,rgba(255,255,255,.06) 85%,rgba(255,255,255,0) 100%);border-right:1px solid rgba(255,255,255,.28)"></div><span class="abs" style="left:10px;top:907px"><svg width="30" height="30" viewBox="0 0 56 56"><path d="M56 28L55.9 35.1L55.6 38.9L55 42L54.2 44.6L53.2 46.9L52 48.8L50.5 50.5L48.8 52L46.9 53.2L44.6 54.2L42 55L38.9 55.6L35.1 55.9L28 56L20.9 55.9L17.1 55.6L14 55L11.4 54.2L9.1 53.2L7.2 52L5.5 50.5L4 48.8L2.8 46.9L1.8 44.6L1 42L0.4 38.9L0.1 35.1L0 28L0.1 20.9L0.4 17.1L1 14L1.8 11.4L2.8 9.1L4 7.2L5.5 5.5L7.2 4L9.1 2.8L11.4 1.8L14 1L17.1 0.4L20.9 0.1L28 0L35.1 0.1L38.9 0.4L42 1L44.6 1.8L46.9 2.8L48.8 4L50.5 5.5L52 7.2L53.2 9.1L54.2 11.4L55 14L55.6 17.1L55.9 20.9Z" fill="#f2a332"/><path d="M12 16.5c0-1.4 1-2.5 2.4-2.5h8.7c1 0 1.6.4 2.3 1.1l1.6 1.9H41.6c1.4 0 2.4 1 2.4 2.4V39.6c0 1.4-1 2.4-2.4 2.4H14.4c-1.4 0-2.4-1-2.4-2.4z" fill="#fdebc8"/><path d="M12 22h32v17.6c0 1.4-1 2.4-2.4 2.4H14.4c-1.4 0-2.4-1-2.4-2.4z" fill="#fff"/></svg></span><span class="abs" style="left:49px;top:911px;font-size:14px;line-height:20px;font-weight:bold;color:#fff;text-shadow:0 0 2px rgba(0,0,0,.5)">文件</span><svg class="abs" style="left:1740px;top:915px" width="24" height="20" viewBox="0 0 24 20"><rect x="6" y="1" width="15" height="11" rx="1" fill="none" stroke="#c9c9d2" stroke-width="1.6"/><rect x="1.5" y="4" width="15" height="10.5" rx="1" fill="#16172b" stroke="#fff" stroke-width="2"/><path d="M9 15v3M5 18.5h8" stroke="#fff" stroke-width="2"/></svg><svg class="abs" style="left:1778px;top:915px" width="28" height="20" viewBox="0 0 28 20"><g fill="none" stroke="#fff" stroke-width="2.4" stroke-linecap="round"><path d="M2 7.5c7-6.5 17-6.5 24 0"/><path d="M6 11.5c5-4.5 11-4.5 16 0"/><path d="M10 15.5c2.5-2.2 5.5-2.2 8 0"/></g><circle cx="14" cy="18" r="1.8" fill="#fff"/></svg><svg class="abs" style="left:1816px;top:916px" width="24" height="17" viewBox="0 0 24 17"><g fill="#fff"><rect x="0" y="10" width="4" height="7"/><rect x="6" y="7" width="4" height="10"/><rect x="12" y="4" width="4" height="13"/><rect x="18" y="0" width="4" height="17"/></g></svg><div class="abs" style="left:1855px;top:916px;width:48px;height:18px;background:linear-gradient(90deg,#55566a 0,#55566a 74%,#2e2f45 74%);border-radius:2px"><svg class="abs" style="left:6px;top:2px" width="10" height="14" viewBox="0 0 10 14"><path d="M2.5 0v3M7 0v3" stroke="#fff" stroke-width="1.6"/><path d="M0.5 3h8.5v3.5c0 2-1.5 3.5-4.2 3.5S.5 8.5.5 6.5z" fill="#fff"/><path d="M4.8 10c0 2 .5 3 2.5 3.5" stroke="#fff" stroke-width="1.4" fill="none"/></svg><span class="abs" style="left:19px;top:0;line-height:18px;font-size:13px;font-weight:bold;color:#fff;letter-spacing:-.3px">74%</span></div></body></html>
